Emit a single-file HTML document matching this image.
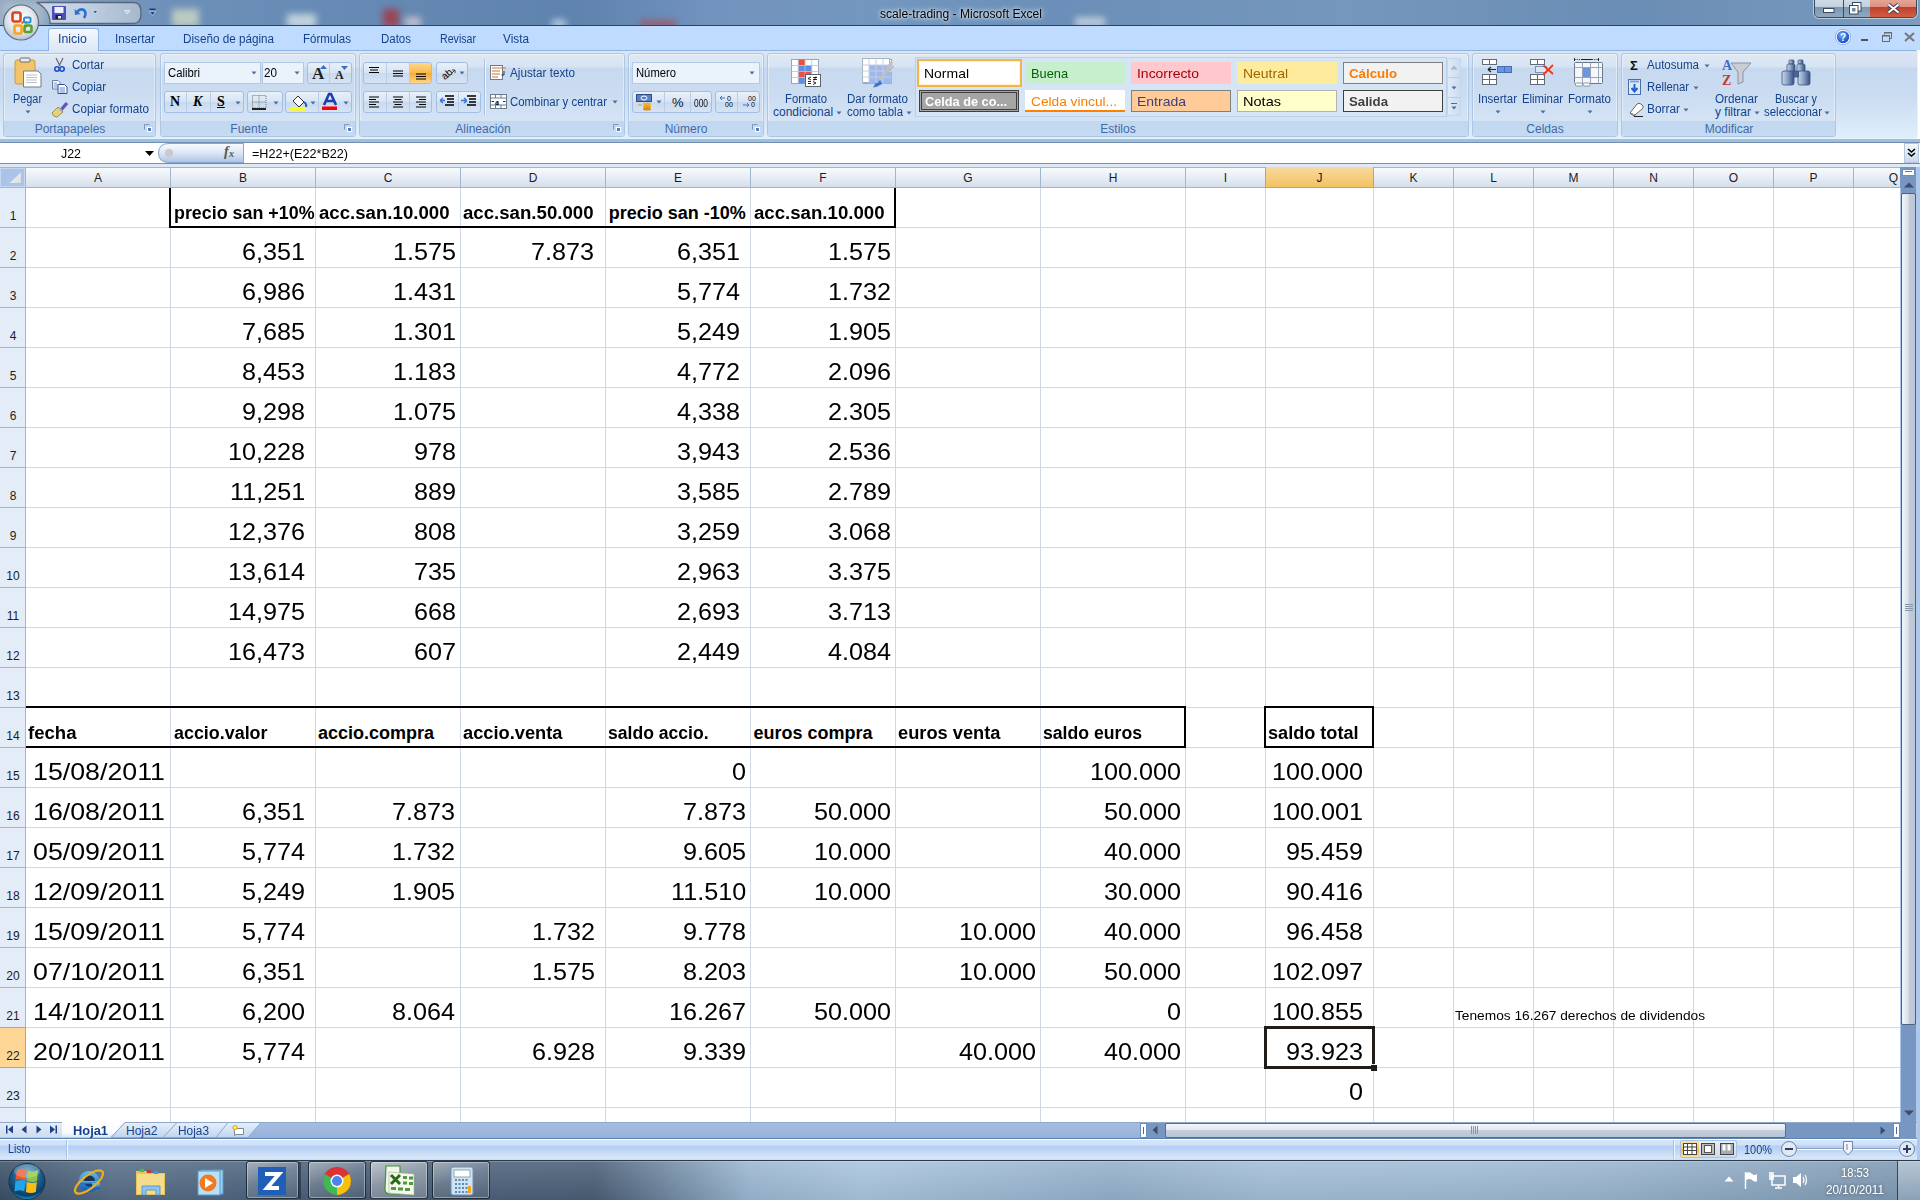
<!DOCTYPE html>
<html><head><meta charset="utf-8"><title>scale-trading - Microsoft Excel</title>
<style>
html,body{margin:0;padding:0;width:1920px;height:1200px;overflow:hidden;background:#fff;}
body{position:relative;font-family:"Liberation Sans",sans-serif;}
body>div,.a{position:absolute;}
svg{position:absolute;overflow:visible}
</style></head><body>
<div style="left:26px;top:188px;width:1874px;height:934px;background:#fff"></div>
<div style="left:26px;top:227px;width:1874px;height:1px;background:#d0d7e5"></div>
<div style="left:26px;top:267px;width:1874px;height:1px;background:#d0d7e5"></div>
<div style="left:26px;top:307px;width:1874px;height:1px;background:#d0d7e5"></div>
<div style="left:26px;top:347px;width:1874px;height:1px;background:#d0d7e5"></div>
<div style="left:26px;top:387px;width:1874px;height:1px;background:#d0d7e5"></div>
<div style="left:26px;top:427px;width:1874px;height:1px;background:#d0d7e5"></div>
<div style="left:26px;top:467px;width:1874px;height:1px;background:#d0d7e5"></div>
<div style="left:26px;top:507px;width:1874px;height:1px;background:#d0d7e5"></div>
<div style="left:26px;top:547px;width:1874px;height:1px;background:#d0d7e5"></div>
<div style="left:26px;top:587px;width:1874px;height:1px;background:#d0d7e5"></div>
<div style="left:26px;top:627px;width:1874px;height:1px;background:#d0d7e5"></div>
<div style="left:26px;top:667px;width:1874px;height:1px;background:#d0d7e5"></div>
<div style="left:26px;top:707px;width:1874px;height:1px;background:#d0d7e5"></div>
<div style="left:26px;top:747px;width:1874px;height:1px;background:#d0d7e5"></div>
<div style="left:26px;top:787px;width:1874px;height:1px;background:#d0d7e5"></div>
<div style="left:26px;top:827px;width:1874px;height:1px;background:#d0d7e5"></div>
<div style="left:26px;top:867px;width:1874px;height:1px;background:#d0d7e5"></div>
<div style="left:26px;top:907px;width:1874px;height:1px;background:#d0d7e5"></div>
<div style="left:26px;top:947px;width:1874px;height:1px;background:#d0d7e5"></div>
<div style="left:26px;top:987px;width:1874px;height:1px;background:#d0d7e5"></div>
<div style="left:26px;top:1027px;width:1874px;height:1px;background:#d0d7e5"></div>
<div style="left:26px;top:1067px;width:1874px;height:1px;background:#d0d7e5"></div>
<div style="left:26px;top:1107px;width:1874px;height:1px;background:#d0d7e5"></div>
<div style="left:170px;top:188px;width:1px;height:934px;background:#d0d7e5"></div>
<div style="left:315px;top:188px;width:1px;height:934px;background:#d0d7e5"></div>
<div style="left:460px;top:188px;width:1px;height:934px;background:#d0d7e5"></div>
<div style="left:605px;top:188px;width:1px;height:934px;background:#d0d7e5"></div>
<div style="left:750px;top:188px;width:1px;height:934px;background:#d0d7e5"></div>
<div style="left:895px;top:188px;width:1px;height:934px;background:#d0d7e5"></div>
<div style="left:1040px;top:188px;width:1px;height:934px;background:#d0d7e5"></div>
<div style="left:1185px;top:188px;width:1px;height:934px;background:#d0d7e5"></div>
<div style="left:1265px;top:188px;width:1px;height:934px;background:#d0d7e5"></div>
<div style="left:1373px;top:188px;width:1px;height:934px;background:#d0d7e5"></div>
<div style="left:1453px;top:188px;width:1px;height:934px;background:#d0d7e5"></div>
<div style="left:1533px;top:188px;width:1px;height:934px;background:#d0d7e5"></div>
<div style="left:1613px;top:188px;width:1px;height:934px;background:#d0d7e5"></div>
<div style="left:1693px;top:188px;width:1px;height:934px;background:#d0d7e5"></div>
<div style="left:1773px;top:188px;width:1px;height:934px;background:#d0d7e5"></div>
<div style="left:1853px;top:188px;width:1px;height:934px;background:#d0d7e5"></div>
<div style="left:0px;top:167px;width:1900px;height:1px;background:#9eb6ce"></div>
<div style="left:26px;top:168px;width:1874px;height:19px;background:linear-gradient(#f8fbfd,#e4eaf3 60%,#d5deeb)"></div>
<div style="left:0px;top:187px;width:1900px;height:1px;background:#9eb6ce"></div>
<div style="left:170px;top:168px;width:1px;height:19px;background:#9eb6ce"></div>
<div style="left:94.00px;top:171.84px;font-size:12px;line-height:12px;color:#1c1c1c;white-space:pre;">A</div>
<div style="left:315px;top:168px;width:1px;height:19px;background:#9eb6ce"></div>
<div style="left:239.00px;top:171.84px;font-size:12px;line-height:12px;color:#1c1c1c;white-space:pre;">B</div>
<div style="left:460px;top:168px;width:1px;height:19px;background:#9eb6ce"></div>
<div style="left:383.67px;top:171.84px;font-size:12px;line-height:12px;color:#1c1c1c;white-space:pre;">C</div>
<div style="left:605px;top:168px;width:1px;height:19px;background:#9eb6ce"></div>
<div style="left:528.67px;top:171.84px;font-size:12px;line-height:12px;color:#1c1c1c;white-space:pre;">D</div>
<div style="left:750px;top:168px;width:1px;height:19px;background:#9eb6ce"></div>
<div style="left:674.00px;top:171.84px;font-size:12px;line-height:12px;color:#1c1c1c;white-space:pre;">E</div>
<div style="left:895px;top:168px;width:1px;height:19px;background:#9eb6ce"></div>
<div style="left:819.34px;top:171.84px;font-size:12px;line-height:12px;color:#1c1c1c;white-space:pre;">F</div>
<div style="left:1040px;top:168px;width:1px;height:19px;background:#9eb6ce"></div>
<div style="left:963.33px;top:171.84px;font-size:12px;line-height:12px;color:#1c1c1c;white-space:pre;">G</div>
<div style="left:1185px;top:168px;width:1px;height:19px;background:#9eb6ce"></div>
<div style="left:1108.67px;top:171.84px;font-size:12px;line-height:12px;color:#1c1c1c;white-space:pre;">H</div>
<div style="left:1265px;top:168px;width:1px;height:19px;background:#9eb6ce"></div>
<div style="left:1223.83px;top:171.84px;font-size:12px;line-height:12px;color:#1c1c1c;white-space:pre;">I</div>
<div style="left:1265px;top:167px;width:109px;height:21px;background:linear-gradient(#f9d99f,#f1c15f);border:0"></div>
<div style="left:1265px;top:167px;width:1px;height:21px;background:#f29536"></div>
<div style="left:1373px;top:167px;width:1px;height:21px;background:#f29536"></div>
<div style="left:1265px;top:187px;width:109px;height:1px;background:#f29536"></div>
<div style="left:1316.50px;top:171.84px;font-size:12px;line-height:12px;color:#1c1c1c;white-space:pre;">J</div>
<div style="left:1453px;top:168px;width:1px;height:19px;background:#9eb6ce"></div>
<div style="left:1409.50px;top:171.84px;font-size:12px;line-height:12px;color:#1c1c1c;white-space:pre;">K</div>
<div style="left:1533px;top:168px;width:1px;height:19px;background:#9eb6ce"></div>
<div style="left:1490.16px;top:171.84px;font-size:12px;line-height:12px;color:#1c1c1c;white-space:pre;">L</div>
<div style="left:1613px;top:168px;width:1px;height:19px;background:#9eb6ce"></div>
<div style="left:1568.50px;top:171.84px;font-size:12px;line-height:12px;color:#1c1c1c;white-space:pre;">M</div>
<div style="left:1693px;top:168px;width:1px;height:19px;background:#9eb6ce"></div>
<div style="left:1649.17px;top:171.84px;font-size:12px;line-height:12px;color:#1c1c1c;white-space:pre;">N</div>
<div style="left:1773px;top:168px;width:1px;height:19px;background:#9eb6ce"></div>
<div style="left:1728.83px;top:171.84px;font-size:12px;line-height:12px;color:#1c1c1c;white-space:pre;">O</div>
<div style="left:1853px;top:168px;width:1px;height:19px;background:#9eb6ce"></div>
<div style="left:1809.50px;top:171.84px;font-size:12px;line-height:12px;color:#1c1c1c;white-space:pre;">P</div>
<div style="left:1933px;top:168px;width:1px;height:19px;background:#9eb6ce"></div>
<div style="left:1888.83px;top:171.84px;font-size:12px;line-height:12px;color:#1c1c1c;white-space:pre;">Q</div>
<div style="left:0px;top:168px;width:25px;height:19px;background:#a9c4e8;border:1px solid #c5d8f0;box-sizing:border-box"></div>
<div style="left:25px;top:167px;width:1px;height:21px;background:#9eb6ce"></div>
<svg style="left:9px;top:172px" width="13" height="12" viewBox="0 0 13 12"><defs><linearGradient id="sa" x1="0" y1="0" x2="1" y2="1"><stop offset="0" stop-color="#f4f6f8"/><stop offset="1" stop-color="#d9dde3"/></linearGradient></defs><path d="M12 0.5 V11 H0.5 Z" fill="url(#sa)"/></svg>
<div style="left:0px;top:188px;width:25px;height:934px;background:#e4ecf7"></div>
<div style="left:25px;top:188px;width:1px;height:934px;background:#9eb6ce"></div>
<div style="left:0px;top:227px;width:25px;height:1px;background:#9eb6ce"></div>
<div style="left:9.66px;top:209.84px;font-size:12px;line-height:12px;color:#1c1c1c;white-space:pre;">1</div>
<div style="left:0px;top:267px;width:25px;height:1px;background:#9eb6ce"></div>
<div style="left:9.66px;top:249.84px;font-size:12px;line-height:12px;color:#1c1c1c;white-space:pre;">2</div>
<div style="left:0px;top:307px;width:25px;height:1px;background:#9eb6ce"></div>
<div style="left:9.66px;top:289.84px;font-size:12px;line-height:12px;color:#1c1c1c;white-space:pre;">3</div>
<div style="left:0px;top:347px;width:25px;height:1px;background:#9eb6ce"></div>
<div style="left:9.66px;top:329.84px;font-size:12px;line-height:12px;color:#1c1c1c;white-space:pre;">4</div>
<div style="left:0px;top:387px;width:25px;height:1px;background:#9eb6ce"></div>
<div style="left:9.66px;top:369.84px;font-size:12px;line-height:12px;color:#1c1c1c;white-space:pre;">5</div>
<div style="left:0px;top:427px;width:25px;height:1px;background:#9eb6ce"></div>
<div style="left:9.66px;top:409.84px;font-size:12px;line-height:12px;color:#1c1c1c;white-space:pre;">6</div>
<div style="left:0px;top:467px;width:25px;height:1px;background:#9eb6ce"></div>
<div style="left:9.66px;top:449.84px;font-size:12px;line-height:12px;color:#1c1c1c;white-space:pre;">7</div>
<div style="left:0px;top:507px;width:25px;height:1px;background:#9eb6ce"></div>
<div style="left:9.66px;top:489.84px;font-size:12px;line-height:12px;color:#1c1c1c;white-space:pre;">8</div>
<div style="left:0px;top:547px;width:25px;height:1px;background:#9eb6ce"></div>
<div style="left:9.66px;top:529.84px;font-size:12px;line-height:12px;color:#1c1c1c;white-space:pre;">9</div>
<div style="left:0px;top:587px;width:25px;height:1px;background:#9eb6ce"></div>
<div style="left:6.33px;top:569.84px;font-size:12px;line-height:12px;color:#1c1c1c;white-space:pre;">10</div>
<div style="left:0px;top:627px;width:25px;height:1px;background:#9eb6ce"></div>
<div style="left:6.77px;top:609.84px;font-size:12px;line-height:12px;color:#1c1c1c;white-space:pre;">11</div>
<div style="left:0px;top:667px;width:25px;height:1px;background:#9eb6ce"></div>
<div style="left:6.33px;top:649.84px;font-size:12px;line-height:12px;color:#1c1c1c;white-space:pre;">12</div>
<div style="left:0px;top:707px;width:25px;height:1px;background:#9eb6ce"></div>
<div style="left:6.33px;top:689.84px;font-size:12px;line-height:12px;color:#1c1c1c;white-space:pre;">13</div>
<div style="left:0px;top:747px;width:25px;height:1px;background:#9eb6ce"></div>
<div style="left:6.33px;top:729.84px;font-size:12px;line-height:12px;color:#1c1c1c;white-space:pre;">14</div>
<div style="left:0px;top:787px;width:25px;height:1px;background:#9eb6ce"></div>
<div style="left:6.33px;top:769.84px;font-size:12px;line-height:12px;color:#1c1c1c;white-space:pre;">15</div>
<div style="left:0px;top:827px;width:25px;height:1px;background:#9eb6ce"></div>
<div style="left:6.33px;top:809.84px;font-size:12px;line-height:12px;color:#1c1c1c;white-space:pre;">16</div>
<div style="left:0px;top:867px;width:25px;height:1px;background:#9eb6ce"></div>
<div style="left:6.33px;top:849.84px;font-size:12px;line-height:12px;color:#1c1c1c;white-space:pre;">17</div>
<div style="left:0px;top:907px;width:25px;height:1px;background:#9eb6ce"></div>
<div style="left:6.33px;top:889.84px;font-size:12px;line-height:12px;color:#1c1c1c;white-space:pre;">18</div>
<div style="left:0px;top:947px;width:25px;height:1px;background:#9eb6ce"></div>
<div style="left:6.33px;top:929.84px;font-size:12px;line-height:12px;color:#1c1c1c;white-space:pre;">19</div>
<div style="left:0px;top:987px;width:25px;height:1px;background:#9eb6ce"></div>
<div style="left:6.33px;top:969.84px;font-size:12px;line-height:12px;color:#1c1c1c;white-space:pre;">20</div>
<div style="left:0px;top:1027px;width:25px;height:1px;background:#9eb6ce"></div>
<div style="left:6.33px;top:1009.84px;font-size:12px;line-height:12px;color:#1c1c1c;white-space:pre;">21</div>
<div style="left:0px;top:1027px;width:26px;height:41px;background:#fed797;"></div>
<div style="left:0px;top:1027px;width:26px;height:1px;background:#f29536"></div>
<div style="left:0px;top:1067px;width:26px;height:1px;background:#f29536"></div>
<div style="left:25px;top:1027px;width:1px;height:41px;background:#f29536"></div>
<div style="left:6.33px;top:1049.84px;font-size:12px;line-height:12px;color:#1c1c1c;white-space:pre;">22</div>
<div style="left:0px;top:1107px;width:25px;height:1px;background:#9eb6ce"></div>
<div style="left:6.33px;top:1089.84px;font-size:12px;line-height:12px;color:#1c1c1c;white-space:pre;">23</div>
<div style="left:6.33px;top:1129.84px;font-size:12px;line-height:12px;color:#1c1c1c;white-space:pre;">24</div>
<div style="left:169px;top:188px;width:2px;height:40px;background:#000"></div>
<div style="left:169px;top:226px;width:727px;height:2px;background:#000"></div>
<div style="left:894px;top:188px;width:2px;height:40px;background:#000"></div>
<div style="left:26px;top:706px;width:1160px;height:2px;background:#000"></div>
<div style="left:26px;top:746px;width:1160px;height:2px;background:#000"></div>
<div style="left:1184px;top:706px;width:2px;height:42px;background:#000"></div>
<div style="left:1264px;top:706px;width:110px;height:2px;background:#000"></div>
<div style="left:1264px;top:746px;width:110px;height:2px;background:#000"></div>
<div style="left:1264px;top:706px;width:2px;height:42px;background:#000"></div>
<div style="left:1372px;top:706px;width:2px;height:42px;background:#000"></div>
<div style="left:1264px;top:1026px;width:111px;height:3px;background:#221c18"></div>
<div style="left:1264px;top:1066px;width:107px;height:3px;background:#221c18"></div>
<div style="left:1264px;top:1026px;width:3px;height:43px;background:#221c18"></div>
<div style="left:1372px;top:1026px;width:3px;height:38px;background:#221c18"></div>
<div style="left:1371px;top:1065px;width:6px;height:6px;background:#221c18"></div>
<div style="left:173.60px;top:204.26px;font-size:18px;line-height:18px;color:#000;font-weight:bold;transform:scaleX(0.9925);transform-origin:0 0;white-space:pre;">precio san +10%</div>
<div style="left:318.50px;top:204.26px;font-size:18px;line-height:18px;color:#000;font-weight:bold;transform:scaleX(1.0350);transform-origin:0 0;white-space:pre;">acc.san.10.000</div>
<div style="left:463.40px;top:204.26px;font-size:18px;line-height:18px;color:#000;font-weight:bold;transform:scaleX(1.0350);transform-origin:0 0;white-space:pre;">acc.san.50.000</div>
<div style="left:608.70px;top:204.26px;font-size:18px;line-height:18px;color:#000;font-weight:bold;white-space:pre;">precio san -10%</div>
<div style="left:753.50px;top:204.26px;font-size:18px;line-height:18px;color:#000;font-weight:bold;transform:scaleX(1.0350);transform-origin:0 0;white-space:pre;">acc.san.10.000</div>
<div style="left:241.74px;top:240.08px;font-size:24px;line-height:24px;color:#000;transform:scaleX(1.0500);transform-origin:0 0;white-space:pre;">6,351</div>
<div style="left:392.89px;top:240.08px;font-size:24px;line-height:24px;color:#000;transform:scaleX(1.0500);transform-origin:0 0;white-space:pre;">1.575</div>
<div style="left:677.14px;top:240.08px;font-size:24px;line-height:24px;color:#000;transform:scaleX(1.0500);transform-origin:0 0;white-space:pre;">6,351</div>
<div style="left:827.54px;top:240.08px;font-size:24px;line-height:24px;color:#000;transform:scaleX(1.0500);transform-origin:0 0;white-space:pre;">1.575</div>
<div style="left:241.74px;top:280.08px;font-size:24px;line-height:24px;color:#000;transform:scaleX(1.0500);transform-origin:0 0;white-space:pre;">6,986</div>
<div style="left:392.89px;top:280.08px;font-size:24px;line-height:24px;color:#000;transform:scaleX(1.0500);transform-origin:0 0;white-space:pre;">1.431</div>
<div style="left:677.14px;top:280.08px;font-size:24px;line-height:24px;color:#000;transform:scaleX(1.0500);transform-origin:0 0;white-space:pre;">5,774</div>
<div style="left:827.54px;top:280.08px;font-size:24px;line-height:24px;color:#000;transform:scaleX(1.0500);transform-origin:0 0;white-space:pre;">1.732</div>
<div style="left:241.74px;top:320.08px;font-size:24px;line-height:24px;color:#000;transform:scaleX(1.0500);transform-origin:0 0;white-space:pre;">7,685</div>
<div style="left:392.89px;top:320.08px;font-size:24px;line-height:24px;color:#000;transform:scaleX(1.0500);transform-origin:0 0;white-space:pre;">1.301</div>
<div style="left:677.14px;top:320.08px;font-size:24px;line-height:24px;color:#000;transform:scaleX(1.0500);transform-origin:0 0;white-space:pre;">5,249</div>
<div style="left:827.54px;top:320.08px;font-size:24px;line-height:24px;color:#000;transform:scaleX(1.0500);transform-origin:0 0;white-space:pre;">1.905</div>
<div style="left:241.74px;top:360.08px;font-size:24px;line-height:24px;color:#000;transform:scaleX(1.0500);transform-origin:0 0;white-space:pre;">8,453</div>
<div style="left:392.89px;top:360.08px;font-size:24px;line-height:24px;color:#000;transform:scaleX(1.0500);transform-origin:0 0;white-space:pre;">1.183</div>
<div style="left:677.14px;top:360.08px;font-size:24px;line-height:24px;color:#000;transform:scaleX(1.0500);transform-origin:0 0;white-space:pre;">4,772</div>
<div style="left:827.54px;top:360.08px;font-size:24px;line-height:24px;color:#000;transform:scaleX(1.0500);transform-origin:0 0;white-space:pre;">2.096</div>
<div style="left:241.74px;top:400.08px;font-size:24px;line-height:24px;color:#000;transform:scaleX(1.0500);transform-origin:0 0;white-space:pre;">9,298</div>
<div style="left:392.89px;top:400.08px;font-size:24px;line-height:24px;color:#000;transform:scaleX(1.0500);transform-origin:0 0;white-space:pre;">1.075</div>
<div style="left:677.14px;top:400.08px;font-size:24px;line-height:24px;color:#000;transform:scaleX(1.0500);transform-origin:0 0;white-space:pre;">4,338</div>
<div style="left:827.54px;top:400.08px;font-size:24px;line-height:24px;color:#000;transform:scaleX(1.0500);transform-origin:0 0;white-space:pre;">2.305</div>
<div style="left:227.73px;top:440.08px;font-size:24px;line-height:24px;color:#000;transform:scaleX(1.0500);transform-origin:0 0;white-space:pre;">10,228</div>
<div style="left:413.91px;top:440.08px;font-size:24px;line-height:24px;color:#000;transform:scaleX(1.0500);transform-origin:0 0;white-space:pre;">978</div>
<div style="left:677.14px;top:440.08px;font-size:24px;line-height:24px;color:#000;transform:scaleX(1.0500);transform-origin:0 0;white-space:pre;">3,943</div>
<div style="left:827.54px;top:440.08px;font-size:24px;line-height:24px;color:#000;transform:scaleX(1.0500);transform-origin:0 0;white-space:pre;">2.536</div>
<div style="left:229.60px;top:480.08px;font-size:24px;line-height:24px;color:#000;transform:scaleX(1.0500);transform-origin:0 0;white-space:pre;">11,251</div>
<div style="left:413.91px;top:480.08px;font-size:24px;line-height:24px;color:#000;transform:scaleX(1.0500);transform-origin:0 0;white-space:pre;">889</div>
<div style="left:677.14px;top:480.08px;font-size:24px;line-height:24px;color:#000;transform:scaleX(1.0500);transform-origin:0 0;white-space:pre;">3,585</div>
<div style="left:827.54px;top:480.08px;font-size:24px;line-height:24px;color:#000;transform:scaleX(1.0500);transform-origin:0 0;white-space:pre;">2.789</div>
<div style="left:227.73px;top:520.08px;font-size:24px;line-height:24px;color:#000;transform:scaleX(1.0500);transform-origin:0 0;white-space:pre;">12,376</div>
<div style="left:413.91px;top:520.08px;font-size:24px;line-height:24px;color:#000;transform:scaleX(1.0500);transform-origin:0 0;white-space:pre;">808</div>
<div style="left:677.14px;top:520.08px;font-size:24px;line-height:24px;color:#000;transform:scaleX(1.0500);transform-origin:0 0;white-space:pre;">3,259</div>
<div style="left:827.54px;top:520.08px;font-size:24px;line-height:24px;color:#000;transform:scaleX(1.0500);transform-origin:0 0;white-space:pre;">3.068</div>
<div style="left:227.73px;top:560.08px;font-size:24px;line-height:24px;color:#000;transform:scaleX(1.0500);transform-origin:0 0;white-space:pre;">13,614</div>
<div style="left:413.91px;top:560.08px;font-size:24px;line-height:24px;color:#000;transform:scaleX(1.0500);transform-origin:0 0;white-space:pre;">735</div>
<div style="left:677.14px;top:560.08px;font-size:24px;line-height:24px;color:#000;transform:scaleX(1.0500);transform-origin:0 0;white-space:pre;">2,963</div>
<div style="left:827.54px;top:560.08px;font-size:24px;line-height:24px;color:#000;transform:scaleX(1.0500);transform-origin:0 0;white-space:pre;">3.375</div>
<div style="left:227.73px;top:600.08px;font-size:24px;line-height:24px;color:#000;transform:scaleX(1.0500);transform-origin:0 0;white-space:pre;">14,975</div>
<div style="left:413.91px;top:600.08px;font-size:24px;line-height:24px;color:#000;transform:scaleX(1.0500);transform-origin:0 0;white-space:pre;">668</div>
<div style="left:677.14px;top:600.08px;font-size:24px;line-height:24px;color:#000;transform:scaleX(1.0500);transform-origin:0 0;white-space:pre;">2,693</div>
<div style="left:827.54px;top:600.08px;font-size:24px;line-height:24px;color:#000;transform:scaleX(1.0500);transform-origin:0 0;white-space:pre;">3.713</div>
<div style="left:227.73px;top:640.08px;font-size:24px;line-height:24px;color:#000;transform:scaleX(1.0500);transform-origin:0 0;white-space:pre;">16,473</div>
<div style="left:413.91px;top:640.08px;font-size:24px;line-height:24px;color:#000;transform:scaleX(1.0500);transform-origin:0 0;white-space:pre;">607</div>
<div style="left:677.14px;top:640.08px;font-size:24px;line-height:24px;color:#000;transform:scaleX(1.0500);transform-origin:0 0;white-space:pre;">2,449</div>
<div style="left:827.54px;top:640.08px;font-size:24px;line-height:24px;color:#000;transform:scaleX(1.0500);transform-origin:0 0;white-space:pre;">4.084</div>
<div style="left:531.44px;top:240.08px;font-size:24px;line-height:24px;color:#000;transform:scaleX(1.0500);transform-origin:0 0;white-space:pre;">7.873</div>
<div style="left:28.40px;top:724.26px;font-size:18px;line-height:18px;color:#000;font-weight:bold;transform:scaleX(1.0316);transform-origin:0 0;white-space:pre;">fecha</div>
<div style="left:173.60px;top:724.26px;font-size:18px;line-height:18px;color:#000;font-weight:bold;transform:scaleX(0.9942);transform-origin:0 0;white-space:pre;">accio.valor</div>
<div style="left:318.00px;top:724.26px;font-size:18px;line-height:18px;color:#000;font-weight:bold;white-space:pre;">accio.compra</div>
<div style="left:462.75px;top:724.26px;font-size:18px;line-height:18px;color:#000;font-weight:bold;transform:scaleX(1.0149);transform-origin:0 0;white-space:pre;">accio.venta</div>
<div style="left:608.00px;top:724.26px;font-size:18px;line-height:18px;color:#000;font-weight:bold;transform:scaleX(0.9754);transform-origin:0 0;white-space:pre;">saldo accio.</div>
<div style="left:753.40px;top:724.26px;font-size:18px;line-height:18px;color:#000;font-weight:bold;white-space:pre;">euros compra</div>
<div style="left:898.40px;top:724.26px;font-size:18px;line-height:18px;color:#000;font-weight:bold;transform:scaleX(1.0145);transform-origin:0 0;white-space:pre;">euros venta</div>
<div style="left:1043.00px;top:724.26px;font-size:18px;line-height:18px;color:#000;font-weight:bold;transform:scaleX(0.9800);transform-origin:0 0;white-space:pre;">saldo euros</div>
<div style="left:1268.00px;top:724.26px;font-size:18px;line-height:18px;color:#000;font-weight:bold;transform:scaleX(1.0056);transform-origin:0 0;white-space:pre;">saldo total</div>
<div style="left:33.00px;top:760.08px;font-size:24px;line-height:24px;color:#000;transform:scaleX(1.1150);transform-origin:0 0;white-space:pre;">15/08/2011</div>
<div style="left:731.69px;top:760.08px;font-size:24px;line-height:24px;color:#000;transform:scaleX(1.0500);transform-origin:0 0;white-space:pre;">0</div>
<div style="left:1089.82px;top:760.08px;font-size:24px;line-height:24px;color:#000;transform:scaleX(1.0500);transform-origin:0 0;white-space:pre;">100.000</div>
<div style="left:1271.72px;top:760.08px;font-size:24px;line-height:24px;color:#000;transform:scaleX(1.0500);transform-origin:0 0;white-space:pre;">100.000</div>
<div style="left:33.00px;top:800.08px;font-size:24px;line-height:24px;color:#000;transform:scaleX(1.1150);transform-origin:0 0;white-space:pre;">16/08/2011</div>
<div style="left:241.89px;top:800.08px;font-size:24px;line-height:24px;color:#000;transform:scaleX(1.0500);transform-origin:0 0;white-space:pre;">6,351</div>
<div style="left:391.89px;top:800.08px;font-size:24px;line-height:24px;color:#000;transform:scaleX(1.0500);transform-origin:0 0;white-space:pre;">7.873</div>
<div style="left:682.64px;top:800.08px;font-size:24px;line-height:24px;color:#000;transform:scaleX(1.0500);transform-origin:0 0;white-space:pre;">7.873</div>
<div style="left:814.13px;top:800.08px;font-size:24px;line-height:24px;color:#000;transform:scaleX(1.0500);transform-origin:0 0;white-space:pre;">50.000</div>
<div style="left:1103.83px;top:800.08px;font-size:24px;line-height:24px;color:#000;transform:scaleX(1.0500);transform-origin:0 0;white-space:pre;">50.000</div>
<div style="left:1271.72px;top:800.08px;font-size:24px;line-height:24px;color:#000;transform:scaleX(1.0500);transform-origin:0 0;white-space:pre;">100.001</div>
<div style="left:33.00px;top:840.08px;font-size:24px;line-height:24px;color:#000;transform:scaleX(1.1150);transform-origin:0 0;white-space:pre;">05/09/2011</div>
<div style="left:241.89px;top:840.08px;font-size:24px;line-height:24px;color:#000;transform:scaleX(1.0500);transform-origin:0 0;white-space:pre;">5,774</div>
<div style="left:391.89px;top:840.08px;font-size:24px;line-height:24px;color:#000;transform:scaleX(1.0500);transform-origin:0 0;white-space:pre;">1.732</div>
<div style="left:682.64px;top:840.08px;font-size:24px;line-height:24px;color:#000;transform:scaleX(1.0500);transform-origin:0 0;white-space:pre;">9.605</div>
<div style="left:814.13px;top:840.08px;font-size:24px;line-height:24px;color:#000;transform:scaleX(1.0500);transform-origin:0 0;white-space:pre;">10.000</div>
<div style="left:1103.83px;top:840.08px;font-size:24px;line-height:24px;color:#000;transform:scaleX(1.0500);transform-origin:0 0;white-space:pre;">40.000</div>
<div style="left:1285.73px;top:840.08px;font-size:24px;line-height:24px;color:#000;transform:scaleX(1.0500);transform-origin:0 0;white-space:pre;">95.459</div>
<div style="left:33.00px;top:880.08px;font-size:24px;line-height:24px;color:#000;transform:scaleX(1.1150);transform-origin:0 0;white-space:pre;">12/09/2011</div>
<div style="left:241.89px;top:880.08px;font-size:24px;line-height:24px;color:#000;transform:scaleX(1.0500);transform-origin:0 0;white-space:pre;">5,249</div>
<div style="left:391.89px;top:880.08px;font-size:24px;line-height:24px;color:#000;transform:scaleX(1.0500);transform-origin:0 0;white-space:pre;">1.905</div>
<div style="left:670.50px;top:880.08px;font-size:24px;line-height:24px;color:#000;transform:scaleX(1.0500);transform-origin:0 0;white-space:pre;">11.510</div>
<div style="left:814.13px;top:880.08px;font-size:24px;line-height:24px;color:#000;transform:scaleX(1.0500);transform-origin:0 0;white-space:pre;">10.000</div>
<div style="left:1103.83px;top:880.08px;font-size:24px;line-height:24px;color:#000;transform:scaleX(1.0500);transform-origin:0 0;white-space:pre;">30.000</div>
<div style="left:1285.73px;top:880.08px;font-size:24px;line-height:24px;color:#000;transform:scaleX(1.0500);transform-origin:0 0;white-space:pre;">90.416</div>
<div style="left:33.00px;top:920.08px;font-size:24px;line-height:24px;color:#000;transform:scaleX(1.1150);transform-origin:0 0;white-space:pre;">15/09/2011</div>
<div style="left:241.89px;top:920.08px;font-size:24px;line-height:24px;color:#000;transform:scaleX(1.0500);transform-origin:0 0;white-space:pre;">5,774</div>
<div style="left:531.74px;top:920.08px;font-size:24px;line-height:24px;color:#000;transform:scaleX(1.0500);transform-origin:0 0;white-space:pre;">1.732</div>
<div style="left:682.64px;top:920.08px;font-size:24px;line-height:24px;color:#000;transform:scaleX(1.0500);transform-origin:0 0;white-space:pre;">9.778</div>
<div style="left:959.23px;top:920.08px;font-size:24px;line-height:24px;color:#000;transform:scaleX(1.0500);transform-origin:0 0;white-space:pre;">10.000</div>
<div style="left:1103.83px;top:920.08px;font-size:24px;line-height:24px;color:#000;transform:scaleX(1.0500);transform-origin:0 0;white-space:pre;">40.000</div>
<div style="left:1285.73px;top:920.08px;font-size:24px;line-height:24px;color:#000;transform:scaleX(1.0500);transform-origin:0 0;white-space:pre;">96.458</div>
<div style="left:33.00px;top:960.08px;font-size:24px;line-height:24px;color:#000;transform:scaleX(1.1150);transform-origin:0 0;white-space:pre;">07/10/2011</div>
<div style="left:241.89px;top:960.08px;font-size:24px;line-height:24px;color:#000;transform:scaleX(1.0500);transform-origin:0 0;white-space:pre;">6,351</div>
<div style="left:531.74px;top:960.08px;font-size:24px;line-height:24px;color:#000;transform:scaleX(1.0500);transform-origin:0 0;white-space:pre;">1.575</div>
<div style="left:682.64px;top:960.08px;font-size:24px;line-height:24px;color:#000;transform:scaleX(1.0500);transform-origin:0 0;white-space:pre;">8.203</div>
<div style="left:959.23px;top:960.08px;font-size:24px;line-height:24px;color:#000;transform:scaleX(1.0500);transform-origin:0 0;white-space:pre;">10.000</div>
<div style="left:1103.83px;top:960.08px;font-size:24px;line-height:24px;color:#000;transform:scaleX(1.0500);transform-origin:0 0;white-space:pre;">50.000</div>
<div style="left:1271.72px;top:960.08px;font-size:24px;line-height:24px;color:#000;transform:scaleX(1.0500);transform-origin:0 0;white-space:pre;">102.097</div>
<div style="left:33.00px;top:1000.08px;font-size:24px;line-height:24px;color:#000;transform:scaleX(1.1150);transform-origin:0 0;white-space:pre;">14/10/2011</div>
<div style="left:241.89px;top:1000.08px;font-size:24px;line-height:24px;color:#000;transform:scaleX(1.0500);transform-origin:0 0;white-space:pre;">6,200</div>
<div style="left:391.89px;top:1000.08px;font-size:24px;line-height:24px;color:#000;transform:scaleX(1.0500);transform-origin:0 0;white-space:pre;">8.064</div>
<div style="left:668.63px;top:1000.08px;font-size:24px;line-height:24px;color:#000;transform:scaleX(1.0500);transform-origin:0 0;white-space:pre;">16.267</div>
<div style="left:814.13px;top:1000.08px;font-size:24px;line-height:24px;color:#000;transform:scaleX(1.0500);transform-origin:0 0;white-space:pre;">50.000</div>
<div style="left:1166.89px;top:1000.08px;font-size:24px;line-height:24px;color:#000;transform:scaleX(1.0500);transform-origin:0 0;white-space:pre;">0</div>
<div style="left:1271.72px;top:1000.08px;font-size:24px;line-height:24px;color:#000;transform:scaleX(1.0500);transform-origin:0 0;white-space:pre;">100.855</div>
<div style="left:33.00px;top:1040.08px;font-size:24px;line-height:24px;color:#000;transform:scaleX(1.1150);transform-origin:0 0;white-space:pre;">20/10/2011</div>
<div style="left:241.89px;top:1040.08px;font-size:24px;line-height:24px;color:#000;transform:scaleX(1.0500);transform-origin:0 0;white-space:pre;">5,774</div>
<div style="left:531.74px;top:1040.08px;font-size:24px;line-height:24px;color:#000;transform:scaleX(1.0500);transform-origin:0 0;white-space:pre;">6.928</div>
<div style="left:682.64px;top:1040.08px;font-size:24px;line-height:24px;color:#000;transform:scaleX(1.0500);transform-origin:0 0;white-space:pre;">9.339</div>
<div style="left:959.23px;top:1040.08px;font-size:24px;line-height:24px;color:#000;transform:scaleX(1.0500);transform-origin:0 0;white-space:pre;">40.000</div>
<div style="left:1103.83px;top:1040.08px;font-size:24px;line-height:24px;color:#000;transform:scaleX(1.0500);transform-origin:0 0;white-space:pre;">40.000</div>
<div style="left:1285.73px;top:1040.08px;font-size:24px;line-height:24px;color:#000;transform:scaleX(1.0500);transform-origin:0 0;white-space:pre;">93.923</div>
<div style="left:1348.79px;top:1080.08px;font-size:24px;line-height:24px;color:#000;transform:scaleX(1.0500);transform-origin:0 0;white-space:pre;">0</div>
<div style="left:1455.00px;top:1009.00px;font-size:13px;line-height:13px;color:#000;transform:scaleX(1.0547);transform-origin:0 0;white-space:pre;">Tenemos 16.267 derechos de dividendos</div>
<div style="left:0;top:0;width:1920px;height:25px;background:linear-gradient(90deg,#8aa5c3 0%,#6d90b9 9%,#6589b3 20%,#5e83ad 30%,#7193bd 37%,#7497bf 45%,#6b8fb8 55%,#7597bd 70%,#6a8db5 85%,#7b9bbf 100%)"></div>
<div style="left:0;top:0;width:1920px;height:25px;overflow:hidden"><div style="position:absolute;left:0;top:0;width:45px;height:25px;background:#a8b8c8;filter:blur(4px)"></div><div style="position:absolute;left:172px;top:9px;width:27px;height:18px;background:#bccbc2;filter:blur(3.5px)"></div><div style="position:absolute;left:287px;top:14px;width:29px;height:14px;background:#c3d3dd;filter:blur(3.5px)"></div><div style="position:absolute;left:383px;top:9px;width:16px;height:18px;background:#9a4456;filter:blur(3.5px)"></div><div style="position:absolute;left:405px;top:17px;width:16px;height:10px;background:#c4bfd2;filter:blur(3.5px)"></div><div style="position:absolute;left:640px;top:21px;width:36px;height:6px;background:#a05060;filter:blur(3.5px)"></div><div style="position:absolute;left:552px;top:20px;width:14px;height:7px;background:#c5d5e5;filter:blur(3.5px)"></div><div style="position:absolute;left:1075px;top:17px;width:30px;height:10px;background:#b8c8d8;filter:blur(3px)"></div></div>
<div style="left:0px;top:25px;width:1920px;height:1px;background:#2f4258"></div>
<div style="left:880.00px;top:7.84px;font-size:12px;line-height:12px;color:#000;transform:scaleX(1.0080);transform-origin:0 0;white-space:pre;text-shadow:0 0 6px #fff,0 0 3px rgba(255,255,255,0.8)">scale-trading - Microsoft Excel</div>
<div style="left:1814px;top:-2px;width:103px;height:20px;border:1px solid #3a4a5e;border-radius:0 0 5px 5px;box-sizing:border-box;overflow:hidden;box-shadow:0 0 0 1px rgba(255,255,255,0.5)"><div style="position:absolute;left:0;top:0;width:28px;height:20px;background:linear-gradient(#d0dce8 0%,#c2d1e0 40%,#7d97b3 41%,#93acc6 100%)"></div><div style="position:absolute;left:28px;top:0;width:1px;height:20px;background:#3a4a5e"></div><div style="position:absolute;left:29px;top:0;width:26px;height:20px;background:linear-gradient(#d0dce8 0%,#c2d1e0 40%,#7d97b3 41%,#93acc6 100%)"></div><div style="position:absolute;left:55px;top:0;width:48px;height:20px;background:linear-gradient(#e8a89c 0%,#dc8f80 40%,#c0402a 41%,#d4634a 100%)"></div></div>
<svg style="left:1823px;top:8px;" width="12" height="5" viewBox="0 0 12 5"><rect x="0.5" y="0.5" width="10.5" height="4" fill="#fff" stroke="#3a4a5e" stroke-width="1"/></svg>
<svg style="left:1849px;top:2px;" width="13" height="12" viewBox="0 0 13 12"><rect x="3.5" y="0.5" width="8.5" height="8.5" fill="#fff" stroke="#3a4a5e"/><rect x="0.5" y="3.5" width="8.5" height="8.5" fill="#fff" stroke="#3a4a5e"/><rect x="3" y="6" width="3.5" height="3.5" fill="#6f8aa6"/></svg>
<svg style="left:1887px;top:3px;" width="13" height="11" viewBox="0 0 13 11"><path d="M1.5 1.5 L11.5 9.5 M11.5 1.5 L1.5 9.5" stroke="#3a3a4a" stroke-width="4"/><path d="M1.5 1.5 L11.5 9.5 M11.5 1.5 L1.5 9.5" stroke="#fff" stroke-width="2.2"/></svg>
<div style="left:0px;top:26px;width:1920px;height:24px;background:#bfdbff"></div>
<svg style="left:2px;top:3px;" width="40" height="40" viewBox="0 0 40 40"><defs><radialGradient id="ob" cx="50%" cy="40%" r="60%"><stop offset="0" stop-color="#ffffff"/><stop offset="0.6" stop-color="#e4e8ee"/><stop offset="1" stop-color="#b7c1cc"/></radialGradient></defs><circle cx="19" cy="19.5" r="17.5" fill="url(#ob)" stroke="#5d6b7c" stroke-width="1.2"/><path d="M11 21 H28" stroke="#c8cfd8" stroke-width="1" opacity="0.6"/><rect x="10.5" y="9.5" width="8" height="9" rx="2" fill="none" stroke="#e0451a" stroke-width="2.6"/><rect x="22" y="14.5" width="6.5" height="5" rx="1.5" fill="none" stroke="#2b8fd8" stroke-width="2"/><rect x="12.5" y="22.5" width="7" height="8" rx="1.5" fill="none" stroke="#f5a623" stroke-width="2.6"/><rect x="22.5" y="22.5" width="7" height="6.5" rx="1.5" fill="none" stroke="#5aa02c" stroke-width="2.6"/><circle cx="20.5" cy="19.5" r="1.3" fill="#e85a1a"/><circle cx="24" cy="19.5" r="1.2" fill="#2b8fd8"/><circle cx="20.5" cy="23.5" r="1.2" fill="#f5c023"/><circle cx="24" cy="23.5" r="1.2" fill="#5aa02c"/></svg>
<svg style="left:35px;top:1px;" width="109" height="24" viewBox="0 0 109 24"><defs><linearGradient id="qg" x1="0" y1="0" x2="1" y2="0"><stop offset="0" stop-color="#c6d4e3"/><stop offset="0.4" stop-color="#c3d3e6"/><stop offset="1" stop-color="#a6b8ce"/></linearGradient></defs><path d="M1.5 1.5 H99 Q106 1.5 106 12 Q106 22.5 99 22.5 H15 Q15 8 1.5 1.5 Z" fill="url(#qg)" stroke="#5b6777" stroke-width="1.3"/></svg>
<svg style="left:52px;top:6px;" width="14" height="14" viewBox="0 0 14 14"><rect x="0" y="0" width="14" height="14" rx="1" fill="#4b4fb9"/><rect x="2.5" y="1" width="9" height="6" fill="#eef0fb"/><rect x="3.5" y="9" width="6" height="4" fill="#1d1d35"/><rect x="6" y="10" width="3" height="2.5" fill="#eee"/></svg>
<svg style="left:74px;top:6px;" width="14" height="14" viewBox="0 0 14 14"><path d="M3 6 Q6 2 10 4 Q13 7 10 12" stroke="#2f6fd0" stroke-width="2.6" fill="none"/><path d="M0.5 3 L1 9 L6.5 8 Z" fill="#2f6fd0"/></svg>
<svg style="left:92px;top:10px;" width="7" height="5" viewBox="0 0 7 5"><path d="M0.5 0.5 L6 0.5 L3.2 4 Z" fill="#2b5ba8" stroke="#fff" stroke-width="0.6"/></svg>
<svg style="left:105px;top:6px;" width="14" height="14" viewBox="0 0 14 14"><path d="M11 6 Q8 2 4 4 Q1 7 4 12" stroke="#b3c3d5" stroke-width="2.4" fill="none"/><path d="M13.5 3 L13 9 L7.5 8 Z" fill="#b3c3d5"/></svg>
<svg style="left:124px;top:10px;" width="7" height="5" viewBox="0 0 7 5"><path d="M0.5 0.5 L6 0.5 L3.2 4 Z" fill="#c5ced8" stroke="#fff" stroke-width="0.6"/></svg>
<svg style="left:149px;top:8px;" width="7" height="9" viewBox="0 0 7 9"><rect x="0.5" y="0.5" width="6" height="1.5" fill="#1b3e8c"/><path d="M0.5 3.5 L6.5 3.5 L3.5 7.5 Z" fill="#1b3e8c" stroke="#fff" stroke-width="0.5"/></svg>
<div style="left:48px;top:28px;width:51px;height:23px;border:1px solid #8db2e3;border-bottom:0;border-radius:3px 3px 0 0;box-sizing:border-box;background:linear-gradient(#f6f9fd,#e5edf8 60%,#dde8f6)"></div>
<div style="left:58.25px;top:32.84px;font-size:12px;line-height:12px;color:#15428b;transform:scaleX(1.0263);transform-origin:0 0;white-space:pre;">Inicio</div>
<div style="left:114.50px;top:32.84px;font-size:12px;line-height:12px;color:#15428b;transform:scaleX(0.9833);transform-origin:0 0;white-space:pre;">Insertar</div>
<div style="left:183.00px;top:32.84px;font-size:12px;line-height:12px;color:#15428b;transform:scaleX(0.9743);transform-origin:0 0;white-space:pre;">Diseño de página</div>
<div style="left:302.50px;top:32.84px;font-size:12px;line-height:12px;color:#15428b;transform:scaleX(0.9599);transform-origin:0 0;white-space:pre;">Fórmulas</div>
<div style="left:380.50px;top:32.84px;font-size:12px;line-height:12px;color:#15428b;transform:scaleX(0.9571);transform-origin:0 0;white-space:pre;">Datos</div>
<div style="left:439.50px;top:32.84px;font-size:12px;line-height:12px;color:#15428b;transform:scaleX(0.8851);transform-origin:0 0;white-space:pre;">Revisar</div>
<div style="left:502.50px;top:32.84px;font-size:12px;line-height:12px;color:#15428b;transform:scaleX(0.9826);transform-origin:0 0;white-space:pre;">Vista</div>
<svg style="left:1835px;top:29px;" width="16" height="16" viewBox="0 0 16 16"><defs><radialGradient id="hg" cx="40%" cy="35%" r="70%"><stop offset="0" stop-color="#6fa8ff"/><stop offset="1" stop-color="#0b3fb8"/></radialGradient></defs><circle cx="8" cy="8" r="6.8" fill="url(#hg)" stroke="#fff" stroke-width="1.2"/><circle cx="8" cy="8" r="7.6" fill="none" stroke="#6a90c8" stroke-width="0.6"/><text x="8" y="12" font-size="10" font-weight="bold" text-anchor="middle" fill="#fff" font-family="Liberation Sans">?</text></svg>
<div style="left:1861px;top:39px;width:7px;height:2px;background:#555"></div>
<svg style="left:1882px;top:32px;" width="10" height="10" viewBox="0 0 10 10"><path d="M2.5 2.5 V0.5 H9.5 V6.5 H7.5" fill="none" stroke="#6a6a6a"/><rect x="2.5" y="0" width="7" height="1.5" fill="#6a6a6a"/><rect x="0.5" y="3.5" width="7" height="6" fill="none" stroke="#6a6a6a"/><rect x="0.5" y="3" width="7" height="1.5" fill="#6a6a6a"/></svg>
<svg style="left:1904px;top:32px;" width="11" height="10" viewBox="0 0 11 10"><path d="M1 1 L10 9 M10 1 L1 9" stroke="#777" stroke-width="2"/></svg>
<div style="left:-3px;top:50px;width:1921px;height:89px;background:linear-gradient(#dbe6f4 0px,#d2dff1 16px,#c4d8f0 17px,#cadcf1 45px,#e0effc 88px);border:1px solid #8db2e3;border-bottom-color:#dff5ff;border-right-color:#dff5ff;border-radius:0 3px 4px 0;box-sizing:border-box"></div>
<div style="left:0px;top:139px;width:1920px;height:3px;background:#a6bdd7"></div>
<div style="left:49px;top:50px;width:49px;height:2px;background:#dce7f5"></div>
<div style="left:3px;top:53px;width:153px;height:84px;border:1px solid #adc6e4;border-radius:3px;box-sizing:border-box;background:linear-gradient(#dfe9f5 0px,#d6e3f3 13px,#c7d9ef 14px,#cbdcf1 40px,#d4e4f5 67px);box-shadow:inset 0 0 0 1px rgba(255,255,255,0.4)"></div>
<div style="left:4px;top:121px;width:151px;height:15px;background:linear-gradient(#c1d7ef,#c6dbf2);border-radius:0 0 2px 2px"></div>
<div style="left:34.64px;top:122.84px;font-size:12px;line-height:12px;color:#3e6aaa;white-space:pre;">Portapapeles</div>
<svg style="left:144px;top:124px;" width="8" height="8" viewBox="0 0 8 8"><path d="M0.5 5.5 V0.5 H5.5" stroke="#8097b5" fill="none"/><rect x="3" y="3" width="5" height="5" fill="#fff"/><rect x="4" y="4" width="3" height="3" fill="#5a7bb0"/></svg>
<div style="left:160px;top:53px;width:196px;height:84px;border:1px solid #adc6e4;border-radius:3px;box-sizing:border-box;background:linear-gradient(#dfe9f5 0px,#d6e3f3 13px,#c7d9ef 14px,#cbdcf1 40px,#d4e4f5 67px);box-shadow:inset 0 0 0 1px rgba(255,255,255,0.4)"></div>
<div style="left:161px;top:121px;width:194px;height:15px;background:linear-gradient(#c1d7ef,#c6dbf2);border-radius:0 0 2px 2px"></div>
<div style="left:230.32px;top:122.84px;font-size:12px;line-height:12px;color:#3e6aaa;white-space:pre;">Fuente</div>
<svg style="left:344px;top:124px;" width="8" height="8" viewBox="0 0 8 8"><path d="M0.5 5.5 V0.5 H5.5" stroke="#8097b5" fill="none"/><rect x="3" y="3" width="5" height="5" fill="#fff"/><rect x="4" y="4" width="3" height="3" fill="#5a7bb0"/></svg>
<div style="left:359px;top:53px;width:266px;height:84px;border:1px solid #adc6e4;border-radius:3px;box-sizing:border-box;background:linear-gradient(#dfe9f5 0px,#d6e3f3 13px,#c7d9ef 14px,#cbdcf1 40px,#d4e4f5 67px);box-shadow:inset 0 0 0 1px rgba(255,255,255,0.4)"></div>
<div style="left:360px;top:121px;width:264px;height:15px;background:linear-gradient(#c1d7ef,#c6dbf2);border-radius:0 0 2px 2px"></div>
<div style="left:455.32px;top:122.84px;font-size:12px;line-height:12px;color:#3e6aaa;white-space:pre;">Alineación</div>
<svg style="left:613px;top:124px;" width="8" height="8" viewBox="0 0 8 8"><path d="M0.5 5.5 V0.5 H5.5" stroke="#8097b5" fill="none"/><rect x="3" y="3" width="5" height="5" fill="#fff"/><rect x="4" y="4" width="3" height="3" fill="#5a7bb0"/></svg>
<div style="left:628px;top:53px;width:136px;height:84px;border:1px solid #adc6e4;border-radius:3px;box-sizing:border-box;background:linear-gradient(#dfe9f5 0px,#d6e3f3 13px,#c7d9ef 14px,#cbdcf1 40px,#d4e4f5 67px);box-shadow:inset 0 0 0 1px rgba(255,255,255,0.4)"></div>
<div style="left:629px;top:121px;width:134px;height:15px;background:linear-gradient(#c1d7ef,#c6dbf2);border-radius:0 0 2px 2px"></div>
<div style="left:664.66px;top:122.84px;font-size:12px;line-height:12px;color:#3e6aaa;white-space:pre;">Número</div>
<svg style="left:752px;top:124px;" width="8" height="8" viewBox="0 0 8 8"><path d="M0.5 5.5 V0.5 H5.5" stroke="#8097b5" fill="none"/><rect x="3" y="3" width="5" height="5" fill="#fff"/><rect x="4" y="4" width="3" height="3" fill="#5a7bb0"/></svg>
<div style="left:767px;top:53px;width:702px;height:84px;border:1px solid #adc6e4;border-radius:3px;box-sizing:border-box;background:linear-gradient(#dfe9f5 0px,#d6e3f3 13px,#c7d9ef 14px,#cbdcf1 40px,#d4e4f5 67px);box-shadow:inset 0 0 0 1px rgba(255,255,255,0.4)"></div>
<div style="left:768px;top:121px;width:700px;height:15px;background:linear-gradient(#c1d7ef,#c6dbf2);border-radius:0 0 2px 2px"></div>
<div style="left:1100.33px;top:122.84px;font-size:12px;line-height:12px;color:#3e6aaa;white-space:pre;">Estilos</div>
<div style="left:1472px;top:53px;width:146px;height:84px;border:1px solid #adc6e4;border-radius:3px;box-sizing:border-box;background:linear-gradient(#dfe9f5 0px,#d6e3f3 13px,#c7d9ef 14px,#cbdcf1 40px,#d4e4f5 67px);box-shadow:inset 0 0 0 1px rgba(255,255,255,0.4)"></div>
<div style="left:1473px;top:121px;width:144px;height:15px;background:linear-gradient(#c1d7ef,#c6dbf2);border-radius:0 0 2px 2px"></div>
<div style="left:1526.32px;top:122.84px;font-size:12px;line-height:12px;color:#3e6aaa;white-space:pre;">Celdas</div>
<div style="left:1621px;top:53px;width:215px;height:84px;border:1px solid #adc6e4;border-radius:3px;box-sizing:border-box;background:linear-gradient(#dfe9f5 0px,#d6e3f3 13px,#c7d9ef 14px,#cbdcf1 40px,#d4e4f5 67px);box-shadow:inset 0 0 0 1px rgba(255,255,255,0.4)"></div>
<div style="left:1622px;top:121px;width:213px;height:15px;background:linear-gradient(#c1d7ef,#c6dbf2);border-radius:0 0 2px 2px"></div>
<div style="left:1704.66px;top:122.84px;font-size:12px;line-height:12px;color:#3e6aaa;white-space:pre;">Modificar</div>
<svg style="left:14px;top:57px;" width="28" height="31" viewBox="0 0 28 31"><rect x="1" y="3" width="20" height="24" rx="2" fill="#f2c56d" stroke="#c99a3e"/><rect x="6" y="1" width="10" height="4" rx="1" fill="#e8eaee" stroke="#6d6d6d"/><path d="M9.5 14 H24 L27 17 V30 H9.5 Z" fill="#fff" stroke="#707c8c"/><path d="M12 18 H23 M12 20.5 H23 M12 23 H23 M12 25.5 H23" stroke="#b9c1cc"/></svg>
<div style="left:13.00px;top:92.84px;font-size:12px;line-height:12px;color:#15428b;transform:scaleX(0.9057);transform-origin:0 0;white-space:pre;">Pegar</div>
<svg style="left:24.5px;top:110px;" width="6" height="4" viewBox="0 0 6 4"><path d="M0.5 0.5 L5.5 0.5 L3 3.5 Z" fill="#4c6d99"/></svg>
<svg style="left:54px;top:58px;" width="11" height="14" viewBox="0 0 11 14"><path d="M2 0 L6 8 M9 0 L5 8" stroke="#6c6c74" stroke-width="1.3"/><circle cx="3" cy="11" r="2.2" fill="none" stroke="#1f4fc0" stroke-width="1.6"/><circle cx="8" cy="11" r="2.2" fill="none" stroke="#1f4fc0" stroke-width="1.6"/></svg>
<div style="left:71.50px;top:58.84px;font-size:12px;line-height:12px;color:#15428b;transform:scaleX(0.9599);transform-origin:0 0;white-space:pre;">Cortar</div>
<svg style="left:52px;top:80px;" width="16" height="14" viewBox="0 0 16 14"><path d="M0.5 0.5 H6 L8 2.5 V9 H0.5 Z" fill="#fff" stroke="#6d7f98"/><path d="M1.5 3 H5 M1.5 5 H6 M1.5 7 H6" stroke="#4a78c8" stroke-width="0.8"/><path d="M6 4.5 H12.5 L15 7 V13.5 H6 Z" fill="#fff" stroke="#2d4f9c"/><path d="M7.5 8 H13 M7.5 10 H13 M7.5 12 H13" stroke="#4a78c8" stroke-width="0.9"/></svg>
<div style="left:71.50px;top:80.84px;font-size:12px;line-height:12px;color:#15428b;transform:scaleX(0.9619);transform-origin:0 0;white-space:pre;">Copiar</div>
<svg style="left:51px;top:101px;" width="18" height="17" viewBox="0 0 18 17"><path d="M10 9 L16 2" stroke="#6955b5" stroke-width="3.4"/><path d="M7 6 L12 11 L6 16 Q2 16 1 12 Z" fill="#e7d37a" stroke="#8a7a3a" stroke-width="0.8"/><path d="M8 7 L11 10" stroke="#aaa" stroke-width="2"/></svg>
<div style="left:71.50px;top:102.84px;font-size:12px;line-height:12px;color:#15428b;transform:scaleX(0.9703);transform-origin:0 0;white-space:pre;">Copiar formato</div>
<div style="left:164px;top:62px;width:97px;height:22px;border:1px solid #b3cae7;box-sizing:border-box;background:#eaf2fc"></div>
<div style="left:262px;top:62px;width:42px;height:22px;border:1px solid #b3cae7;box-sizing:border-box;background:#eaf2fc"></div>
<div style="left:167.50px;top:66.84px;font-size:12px;line-height:12px;color:#000;transform:scaleX(0.9410);transform-origin:0 0;white-space:pre;">Calibri</div>
<svg style="left:250.5px;top:71px;" width="6" height="4" viewBox="0 0 6 4"><path d="M0.5 0.5 L5.5 0.5 L3 3.5 Z" fill="#4c6d99"/></svg>
<div style="left:264.00px;top:66.84px;font-size:12px;line-height:12px;color:#000;transform:scaleX(0.9741);transform-origin:0 0;white-space:pre;">20</div>
<svg style="left:293.5px;top:71px;" width="6" height="4" viewBox="0 0 6 4"><path d="M0.5 0.5 L5.5 0.5 L3 3.5 Z" fill="#4c6d99"/></svg>
<div style="left:307px;top:62px;width:45px;height:22px;border:1px solid #a3bde3;border-radius:3px;box-sizing:border-box;background:linear-gradient(#e8f0fa,#d7e4f4 50%,#c9daf0 51%,#d5e3f4);"></div>
<div style="left:329px;top:63px;width:1px;height:20px;background:#b9cde8"></div>
<div style="left:312.00px;top:64.61px;font-size:17px;line-height:17px;color:#222;font-weight:bold;white-space:pre;font-family:'Liberation Serif',serif">A</div>
<svg style="left:320px;top:65px;" width="7" height="4" viewBox="0 0 7 4"><path d="M0 4 L3.5 0 L7 4 Z" fill="#3a6fc0"/></svg>
<div style="left:335.00px;top:68.84px;font-size:12px;line-height:12px;color:#222;font-weight:bold;white-space:pre;font-family:'Liberation Serif',serif">A</div>
<svg style="left:341px;top:66px;" width="7" height="4" viewBox="0 0 7 4"><path d="M0 0 L3.5 4 L7 0 Z" fill="#3a6fc0"/></svg>
<div style="left:164px;top:91px;width:80px;height:22px;border:1px solid #a3bde3;border-radius:3px;box-sizing:border-box;background:linear-gradient(#e8f0fa,#d7e4f4 50%,#c9daf0 51%,#d5e3f4);"></div>
<div style="left:186px;top:92px;width:1px;height:20px;background:#b9cde8"></div>
<div style="left:210px;top:92px;width:1px;height:20px;background:#b9cde8"></div>
<div style="left:170.00px;top:95.15px;font-size:14px;line-height:14px;color:#000;font-weight:bold;white-space:pre;font-family:'Liberation Serif',serif">N</div>
<div style="left:193.00px;top:95.15px;font-size:14px;line-height:14px;color:#000;font-weight:bold;white-space:pre;font-family:'Liberation Serif',serif;font-style:italic">K</div>
<div style="left:217.00px;top:95.15px;font-size:14px;line-height:14px;color:#000;font-weight:bold;white-space:pre;font-family:'Liberation Serif',serif;text-decoration:underline">S</div>
<svg style="left:234.5px;top:101px;" width="6" height="4" viewBox="0 0 6 4"><path d="M0.5 0.5 L5.5 0.5 L3 3.5 Z" fill="#4c6d99"/></svg>
<div style="left:247px;top:91px;width:36px;height:22px;border:1px solid #a3bde3;border-radius:3px;box-sizing:border-box;background:linear-gradient(#e8f0fa,#d7e4f4 50%,#c9daf0 51%,#d5e3f4);"></div>
<svg style="left:252px;top:95px;" width="15" height="16" viewBox="0 0 15 16"><path d="M0.5 0.5 H14 V13 H0.5 Z M7 0.5 V13 M0.5 7 H14" stroke="#777" stroke-dasharray="1 1" fill="none"/><rect x="0" y="13" width="14" height="2" fill="#222"/></svg>
<svg style="left:272.5px;top:101px;" width="6" height="4" viewBox="0 0 6 4"><path d="M0.5 0.5 L5.5 0.5 L3 3.5 Z" fill="#4c6d99"/></svg>
<div style="left:285px;top:91px;width:67px;height:22px;border:1px solid #a3bde3;border-radius:3px;box-sizing:border-box;background:linear-gradient(#e8f0fa,#d7e4f4 50%,#c9daf0 51%,#d5e3f4);"></div>
<div style="left:318px;top:92px;width:1px;height:20px;background:#b9cde8"></div>
<svg style="left:290px;top:94px;" width="18" height="17" viewBox="0 0 18 17"><path d="M3 7 L8 2 L14 8 L9 13 Z" fill="#fff" stroke="#333" stroke-width="1"/><path d="M14 8 Q17 10 16 13" stroke="#2d5fc0" stroke-width="2" fill="none"/><rect x="0" y="13" width="16" height="3.5" fill="#ffff00"/></svg>
<svg style="left:310px;top:101px;" width="6" height="4" viewBox="0 0 6 4"><path d="M0.5 0.5 L5.5 0.5 L3 3.5 Z" fill="#4c6d99"/></svg>
<svg style="left:322px;top:93px;" width="16" height="18" viewBox="0 0 16 18"><path d="M2 12 L7 1 L9 1 L14 12 M4.5 8 H11.5" stroke="#1b3fb0" stroke-width="2.6" fill="none"/><rect x="0" y="13.5" width="15" height="3.5" fill="#ff0000"/></svg>
<svg style="left:342.5px;top:101px;" width="6" height="4" viewBox="0 0 6 4"><path d="M0.5 0.5 L5.5 0.5 L3 3.5 Z" fill="#4c6d99"/></svg>
<div style="left:363px;top:62px;width:69px;height:22px;border:1px solid #a3bde3;border-radius:3px;box-sizing:border-box;background:linear-gradient(#e8f0fa,#d7e4f4 50%,#c9daf0 51%,#d5e3f4);"></div>
<div style="left:386px;top:63px;width:1px;height:20px;background:#b9cde8"></div>
<div style="left:409px;top:63px;width:1px;height:20px;background:#b9cde8"></div>
<div style="left:410px;top:63px;width:21px;height:20px;background:linear-gradient(#fdd68a,#fbb94a 50%,#f9a935 51%,#fdd68a);border-radius:0 2px 2px 0"></div>
<svg style="left:367px;top:66px;" width="16" height="14" viewBox="0 0 16 14"><path d="M2 1.5 H12 M3 4 H11 M2 6.5 H12" stroke="#000" stroke-width="1.2"/></svg>
<svg style="left:390px;top:66px;" width="16" height="14" viewBox="0 0 16 14"><path d="M3 5 H13 M3 7.5 H13 M3 10 H13" stroke="#000" stroke-width="1.2"/></svg>
<svg style="left:413px;top:66px;" width="16" height="14" viewBox="0 0 16 14"><path d="M3 8 H13 M3 10.5 H13 M3 13 H13" stroke="#000" stroke-width="1.2"/></svg>
<div style="left:436px;top:62px;width:32px;height:22px;border:1px solid #a3bde3;border-radius:3px;box-sizing:border-box;background:linear-gradient(#e8f0fa,#d7e4f4 50%,#c9daf0 51%,#d5e3f4);"></div>
<svg style="left:439px;top:65px;" width="18" height="16" viewBox="0 0 18 16"><text x="2" y="13" font-size="10" font-family="Liberation Sans" fill="#000" transform="rotate(-40 7 9)">ab</text><path d="M8 13 L16 5" stroke="#444" stroke-width="1"/><path d="M13 5 H16 V8" stroke="#444" fill="none"/></svg>
<svg style="left:458.5px;top:71px;" width="6" height="4" viewBox="0 0 6 4"><path d="M0.5 0.5 L5.5 0.5 L3 3.5 Z" fill="#4c6d99"/></svg>
<div style="left:363px;top:91px;width:69px;height:22px;border:1px solid #a3bde3;border-radius:3px;box-sizing:border-box;background:linear-gradient(#e8f0fa,#d7e4f4 50%,#c9daf0 51%,#d5e3f4);"></div>
<div style="left:386px;top:92px;width:1px;height:20px;background:#b9cde8"></div>
<div style="left:409px;top:92px;width:1px;height:20px;background:#b9cde8"></div>
<svg style="left:367px;top:95px;" width="16" height="14" viewBox="0 0 16 14"><path d="M2 2 H12 M2 4.5 H9 M2 7 H12 M2 9.5 H9 M2 12 H12" stroke="#000" stroke-width="1.2"/></svg>
<svg style="left:390px;top:95px;" width="16" height="14" viewBox="0 0 16 14"><path d="M3 2 H13 M4.5 4.5 H11.5 M3 7 H13 M4.5 9.5 H11.5 M3 12 H13" stroke="#000" stroke-width="1.2"/></svg>
<svg style="left:413px;top:95px;" width="16" height="14" viewBox="0 0 16 14"><path d="M3 2 H13 M6 4.5 H13 M3 7 H13 M6 9.5 H13 M3 12 H13" stroke="#000" stroke-width="1.2"/></svg>
<div style="left:436px;top:91px;width:45px;height:22px;border:1px solid #a3bde3;border-radius:3px;box-sizing:border-box;background:linear-gradient(#e8f0fa,#d7e4f4 50%,#c9daf0 51%,#d5e3f4);"></div>
<div style="left:458px;top:92px;width:1px;height:20px;background:#b9cde8"></div>
<svg style="left:439px;top:94px;" width="17" height="16" viewBox="0 0 17 16"><path d="M6 2 H15 M8 5 H15 M8 8 H15 M6 11 H15" stroke="#000" stroke-width="1.4"/><path d="M1 6.5 H6 M1 6.5 L4 4 M1 6.5 L4 9" stroke="#3a70d0" stroke-width="1.3" fill="none"/></svg>
<svg style="left:461px;top:94px;" width="17" height="16" viewBox="0 0 17 16"><path d="M6 2 H15 M8 5 H15 M8 8 H15 M6 11 H15" stroke="#000" stroke-width="1.4"/><path d="M0 6.5 H6 M6 6.5 L3 4 M6 6.5 L3 9" stroke="#3a70d0" stroke-width="1.3" fill="none"/></svg>
<div style="left:484px;top:59px;width:1px;height:56px;background:#a8c1e0;box-shadow:1px 0 0 #eef4fb"></div>
<svg style="left:490px;top:65px;" width="18" height="16" viewBox="0 0 18 16"><rect x="0.5" y="0.5" width="12" height="14" fill="#fff" stroke="#6b7a8c"/><path d="M2 3 H16 M2 6 H10 M2 9 H10 M2 12 H8" stroke="#c67a30" stroke-width="1.2"/><path d="M14 6 V10 L11.5 10" stroke="#333" fill="none"/></svg>
<div style="left:510.00px;top:66.84px;font-size:12px;line-height:12px;color:#15428b;transform:scaleX(0.9746);transform-origin:0 0;white-space:pre;">Ajustar texto</div>
<svg style="left:490px;top:94px;" width="18" height="16" viewBox="0 0 18 16"><rect x="0.5" y="0.5" width="16" height="14" fill="#fff" stroke="#6b7a8c"/><path d="M0.5 4 H16.5 M0.5 11 H16.5 M5.5 0.5 V4 M11 0.5 V4 M5.5 11 V14.5 M11 11 V14.5" stroke="#6b7a8c"/><text x="5" y="10.5" font-size="8" font-weight="bold" font-family="Liberation Serif" fill="#000">a</text><path d="M1.5 7.5 H4 M13 7.5 H15.5" stroke="#333"/></svg>
<div style="left:510.00px;top:95.84px;font-size:12px;line-height:12px;color:#15428b;transform:scaleX(0.9507);transform-origin:0 0;white-space:pre;">Combinar y centrar</div>
<svg style="left:611.5px;top:100px;" width="6" height="4" viewBox="0 0 6 4"><path d="M0.5 0.5 L5.5 0.5 L3 3.5 Z" fill="#4c6d99"/></svg>
<div style="left:632px;top:62px;width:128px;height:22px;border:1px solid #b3cae7;box-sizing:border-box;background:#eaf2fc"></div>
<div style="left:636.00px;top:66.84px;font-size:12px;line-height:12px;color:#000;transform:scaleX(0.9373);transform-origin:0 0;white-space:pre;">Número</div>
<svg style="left:749px;top:71px;" width="6" height="4" viewBox="0 0 6 4"><path d="M0.5 0.5 L5.5 0.5 L3 3.5 Z" fill="#4c6d99"/></svg>
<div style="left:632px;top:91px;width:80px;height:22px;border:1px solid #a3bde3;border-radius:3px;box-sizing:border-box;background:linear-gradient(#e8f0fa,#d7e4f4 50%,#c9daf0 51%,#d5e3f4);"></div>
<div style="left:664px;top:92px;width:1px;height:20px;background:#b9cde8"></div>
<div style="left:690px;top:92px;width:1px;height:20px;background:#b9cde8"></div>
<svg style="left:636px;top:94px;" width="18" height="16" viewBox="0 0 18 16"><rect x="0.5" y="0.5" width="15" height="7" fill="#5a7fc8" stroke="#2d4c8c"/><ellipse cx="8" cy="4" rx="3" ry="2" fill="none" stroke="#fff"/><ellipse cx="11" cy="10" rx="4" ry="1.5" fill="#f0b030"/><ellipse cx="11" cy="12.5" rx="4" ry="1.5" fill="#e8a020"/><ellipse cx="11" cy="15" rx="4" ry="1.5" fill="#d89010"/><path d="M2 11 H6" stroke="#f0b030" stroke-width="1.5"/></svg>
<svg style="left:656px;top:100px;" width="6" height="4" viewBox="0 0 6 4"><path d="M0.5 0.5 L5.5 0.5 L3 3.5 Z" fill="#4c6d99"/></svg>
<div style="left:672.00px;top:96.00px;font-size:13px;line-height:13px;color:#111;white-space:pre;">%</div>
<div style="left:694.00px;top:97.69px;font-size:11px;line-height:11px;color:#111;transform:scaleX(0.7629);transform-origin:0 0;white-space:pre;">000</div>
<div style="left:715px;top:91px;width:45px;height:22px;border:1px solid #a3bde3;border-radius:3px;box-sizing:border-box;background:linear-gradient(#e8f0fa,#d7e4f4 50%,#c9daf0 51%,#d5e3f4);"></div>
<div style="left:737px;top:92px;width:1px;height:20px;background:#b9cde8"></div>
<svg style="left:719px;top:94px;" width="16" height="16" viewBox="0 0 16 16"><text x="8" y="7" font-size="7" font-family="Liberation Sans" fill="#000">0</text><text x="6" y="13" font-size="7" font-family="Liberation Sans" fill="#000">00</text><path d="M1 4 H6 M1 4 L3 2 M1 4 L3 6" stroke="#3a70d0" fill="none"/></svg>
<svg style="left:741px;top:94px;" width="16" height="16" viewBox="0 0 16 16"><text x="7" y="7" font-size="7" font-family="Liberation Sans" fill="#000">00</text><text x="10" y="13" font-size="7" font-family="Liberation Sans" fill="#000">0</text><path d="M2 11 H8 M8 11 L6 9 M8 11 L6 13" stroke="#3a70d0" fill="none"/></svg>
<svg style="left:791px;top:59px;" width="31" height="29" viewBox="0 0 31 29"><rect x="0.5" y="0.5" width="27" height="24" fill="#fff" stroke="#9aa6b6"/><rect x="7.25" y="0.5" width="6.75" height="6" fill="#ee5040"/><rect x="7.25" y="6.5" width="13.5" height="6" fill="#5f8ee0"/><rect x="7.25" y="12.5" width="13.5" height="6" fill="#ee5040"/><rect x="7.25" y="18.5" width="6.75" height="6" fill="#5f8ee0"/><path d="M0.5 6.5 H27.5 M0.5 12.5 H27.5 M0.5 18.5 H27.5 M7.25 0.5 V24.5 M14 0.5 V24.5 M20.75 0.5 V24.5" stroke="#b8c2ce" stroke-width="0.8"/><rect x="14.5" y="15.5" width="15" height="12" fill="#fff" stroke="#5a6470"/><path d="M20 18 L17 19.5 L20 21 M17 22.5 H20 M17 24.5 H20 M22 18.5 H26 M22 20.5 H26 M25 17.5 L23 21.5 M22 22.5 L25 24 L22 25.5" stroke="#111" stroke-width="0.9" fill="none"/></svg>
<svg style="left:863px;top:59px;" width="33" height="30" viewBox="0 0 33 30"><rect x="0.5" y="0.5" width="28" height="24" fill="#fff" stroke="#9aa6b6"/><rect x="7.5" y="6.5" width="21" height="18" fill="#a4c0f0"/><path d="M0.5 6.5 H28.5 M0.5 12.5 H28.5 M0.5 18.5 H28.5 M7.5 0.5 V24.5 M14.5 0.5 V24.5 M21.5 0.5 V24.5" stroke="#c9d3e0" stroke-width="0.8"/><path d="M30.5 7 L21 18" stroke="#d8d8d8" stroke-width="3.2"/><path d="M30.5 7 L21 18" stroke="#8a8a8a" stroke-width="0.8"/><path d="M18 17 L22.5 20.5 L20 23 L16 20 Z" fill="#a8884a"/><path d="M16 20 L20 23 Q16 28 10 28.5 Q12 24 16 20 Z" fill="#4a7ad0"/></svg>
<div style="left:785.00px;top:92.84px;font-size:12px;line-height:12px;color:#15428b;transform:scaleX(0.9401);transform-origin:0 0;white-space:pre;">Formato</div>
<div style="left:773.00px;top:105.84px;font-size:12px;line-height:12px;color:#15428b;white-space:pre;">condicional</div>
<svg style="left:835.5px;top:111px;" width="6" height="4" viewBox="0 0 6 4"><path d="M0.5 0.5 L5.5 0.5 L3 3.5 Z" fill="#4c6d99"/></svg>
<svg style="left:862px;top:58px;" width="33" height="31" viewBox="0 0 33 31"><rect x="0.5" y="0.5" width="27" height="24" fill="#fff" stroke="#a9b4c2"/><rect x="7" y="7" width="21" height="18" fill="#9db8ec"/><path d="M0.5 7 H27.5 M0.5 13 H27.5 M0.5 19 H27.5 M7 0.5 V24.5 M14 0.5 V24.5 M21 0.5 V24.5" stroke="#c7d1de"/><path d="M30 4 L18 22" stroke="#c0c0c0" stroke-width="3"/><path d="M18 22 L13 29 L20 26 Z" fill="#3f6fd0"/></svg>
<div style="left:847.00px;top:92.84px;font-size:12px;line-height:12px;color:#15428b;transform:scaleX(0.9630);transform-origin:0 0;white-space:pre;">Dar formato</div>
<div style="left:846.50px;top:105.84px;font-size:12px;line-height:12px;color:#15428b;transform:scaleX(0.9541);transform-origin:0 0;white-space:pre;">como tabla</div>
<svg style="left:905.5px;top:111px;" width="6" height="4" viewBox="0 0 6 4"><path d="M0.5 0.5 L5.5 0.5 L3 3.5 Z" fill="#4c6d99"/></svg>
<div style="left:915px;top:57px;width:532px;height:60px;border:1px solid #b9d0ec;box-sizing:border-box;background:#d6e5f6"></div>
<div style="left:917px;top:59px;width:105px;height:28px;box-sizing:border-box;background:#fff;border:2px solid #f3b54a;box-shadow:inset 0 0 0 1px #fff2cc"></div>
<div style="left:924.00px;top:67.00px;font-size:13px;line-height:13px;color:#000;transform:scaleX(1.0742);transform-origin:0 0;white-space:pre;">Normal</div>
<div style="left:1025px;top:62px;width:100px;height:22px;box-sizing:border-box;background:#c6efce"></div>
<div style="left:1031.00px;top:67.00px;font-size:13px;line-height:13px;color:#006100;transform:scaleX(0.9843);transform-origin:0 0;white-space:pre;">Buena</div>
<div style="left:1131px;top:62px;width:100px;height:22px;box-sizing:border-box;background:#ffc7ce"></div>
<div style="left:1137.00px;top:67.00px;font-size:13px;line-height:13px;color:#9c0006;transform:scaleX(1.0727);transform-origin:0 0;white-space:pre;">Incorrecto</div>
<div style="left:1237px;top:62px;width:100px;height:22px;box-sizing:border-box;background:#ffeb9c"></div>
<div style="left:1243.00px;top:67.00px;font-size:13px;line-height:13px;color:#9c6500;transform:scaleX(1.0739);transform-origin:0 0;white-space:pre;">Neutral</div>
<div style="left:1343px;top:62px;width:100px;height:22px;box-sizing:border-box;background:#f2f2f2;border:1px solid #7f7f7f"></div>
<div style="left:1349.00px;top:67.00px;font-size:13px;line-height:13px;color:#fa7d00;font-weight:bold;transform:scaleX(1.0224);transform-origin:0 0;white-space:pre;">Cálculo</div>
<div style="left:919px;top:90px;width:100px;height:22px;box-sizing:border-box;background:#a5a5a5;border:3px double #3f3f3f"></div>
<div style="left:925.00px;top:95.00px;font-size:13px;line-height:13px;color:#fff;font-weight:bold;transform:scaleX(0.9786);transform-origin:0 0;white-space:pre;">Celda de co...</div>
<div style="left:1025px;top:90px;width:100px;height:22px;box-sizing:border-box;background:#fff;border-bottom:2px solid #ff8001"></div>
<div style="left:1031.00px;top:95.00px;font-size:13px;line-height:13px;color:#fa7d00;transform:scaleX(1.0533);transform-origin:0 0;white-space:pre;">Celda vincul...</div>
<div style="left:1131px;top:90px;width:100px;height:22px;box-sizing:border-box;background:#ffcc99;border:1px solid #7f7f7f"></div>
<div style="left:1137.00px;top:95.00px;font-size:13px;line-height:13px;color:#3f3f76;transform:scaleX(1.0763);transform-origin:0 0;white-space:pre;">Entrada</div>
<div style="left:1237px;top:90px;width:100px;height:22px;box-sizing:border-box;background:#ffffcc;border:1px solid #b2b2b2"></div>
<div style="left:1243.00px;top:95.00px;font-size:13px;line-height:13px;color:#000;transform:scaleX(1.1190);transform-origin:0 0;white-space:pre;">Notas</div>
<div style="left:1343px;top:90px;width:100px;height:22px;box-sizing:border-box;background:#f2f2f2;border:1px solid #3f3f3f"></div>
<div style="left:1349.00px;top:95.00px;font-size:13px;line-height:13px;color:#3f3f3f;font-weight:bold;transform:scaleX(1.0185);transform-origin:0 0;white-space:pre;">Salida</div>
<div style="left:1447px;top:58px;width:14px;height:58px;border:1px solid #c4d6ee;border-radius:2px;box-sizing:border-box;background:linear-gradient(90deg,#dfeaf7,#cbdcf1)"></div>
<div style="left:1448px;top:77px;width:12px;height:1px;background:#b8cde8"></div>
<div style="left:1448px;top:97px;width:12px;height:1px;background:#b8cde8"></div>
<svg style="left:1450px;top:65px;" width="8" height="5" viewBox="0 0 8 5"><path d="M0.5 4.5 L4 0.5 L7.5 4.5 Z" fill="#a8b8cc"/></svg>
<svg style="left:1451px;top:86px;" width="6" height="4" viewBox="0 0 6 4"><path d="M0.5 0.5 L5.5 0.5 L3 3.5 Z" fill="#4c6d99"/></svg>
<div style="left:1451px;top:103px;width:6px;height:1px;background:#4c6d99"></div>
<svg style="left:1451px;top:106px;" width="6" height="4" viewBox="0 0 6 4"><path d="M0.5 0.5 L5.5 0.5 L3 3.5 Z" fill="#4c6d99"/></svg>
<svg style="left:1481px;top:58px;" width="32" height="28" viewBox="0 0 32 28"><rect x="1.5" y="1.5" width="14" height="5" fill="#fff" stroke="#5f6b7a"/><path d="M8.5 1.5 V6.5" stroke="#5f6b7a"/><rect x="16.5" y="8.5" width="14" height="6" fill="#6a96e0" stroke="#4a6fb0"/><path d="M23.5 8.5 V14.5" stroke="#4a6fb0"/><path d="M7 11.5 H15 M7 11.5 L10 9 M7 11.5 L10 14" stroke="#222" stroke-width="1.2" fill="none"/><rect x="1.5" y="16.5" width="14" height="10" fill="#fff" stroke="#5f6b7a"/><path d="M8.5 16.5 V26.5 M1.5 21.5 H15.5" stroke="#5f6b7a"/></svg>
<div style="left:1478.00px;top:92.84px;font-size:12px;line-height:12px;color:#15428b;transform:scaleX(0.9587);transform-origin:0 0;white-space:pre;">Insertar</div>
<svg style="left:1494.5px;top:110px;" width="6" height="4" viewBox="0 0 6 4"><path d="M0.5 0.5 L5.5 0.5 L3 3.5 Z" fill="#4c6d99"/></svg>
<svg style="left:1529px;top:58px;" width="28" height="28" viewBox="0 0 28 28"><rect x="1.5" y="1.5" width="14" height="5" fill="#fff" stroke="#5f6b7a"/><path d="M8.5 1.5 V6.5" stroke="#5f6b7a"/><rect x="6.5" y="8.5" width="11" height="6" fill="#dfe6ee" stroke="#1f3f8f" stroke-dasharray="1 1"/><rect x="1.5" y="16.5" width="14" height="10" fill="#fff" stroke="#5f6b7a"/><path d="M8.5 16.5 V26.5 M1.5 21.5 H15.5" stroke="#5f6b7a"/><path d="M14 17 L24 7 M14.5 7.5 L24 16" stroke="#ee3a1a" stroke-width="1.8"/></svg>
<div style="left:1522.00px;top:92.84px;font-size:12px;line-height:12px;color:#15428b;transform:scaleX(0.9460);transform-origin:0 0;white-space:pre;">Eliminar</div>
<svg style="left:1539.5px;top:110px;" width="6" height="4" viewBox="0 0 6 4"><path d="M0.5 0.5 L5.5 0.5 L3 3.5 Z" fill="#4c6d99"/></svg>
<svg style="left:1573px;top:58px;" width="32" height="30" viewBox="0 0 32 30"><path d="M1.5 0 V3 M25.5 0 V3" stroke="#222"/><path d="M1.5 1.5 H25.5" stroke="#222" stroke-dasharray="1 1.2"/><path d="M8 1.5 H19" stroke="#222"/><rect x="1.5" y="4.5" width="28" height="21" rx="1" fill="#f4f7fb" stroke="#6b7788"/><rect x="9.5" y="9.5" width="8" height="10" fill="#6a96e0"/><path d="M1.5 9.5 H29.5 M1.5 19.5 H29.5 M9.5 4.5 V25.5 M17.5 4.5 V25.5 M25.5 4.5 V25.5" stroke="#9aa6b6"/><rect x="2.5" y="25" width="7" height="3" rx="1" fill="#fff" stroke="#8a96a5"/><rect x="10" y="25" width="7" height="3" rx="1" fill="#fff" stroke="#8a96a5"/></svg>
<div style="left:1568.00px;top:92.84px;font-size:12px;line-height:12px;color:#15428b;transform:scaleX(0.9625);transform-origin:0 0;white-space:pre;">Formato</div>
<svg style="left:1586.5px;top:110px;" width="6" height="4" viewBox="0 0 6 4"><path d="M0.5 0.5 L5.5 0.5 L3 3.5 Z" fill="#4c6d99"/></svg>
<div style="left:1630.00px;top:59.00px;font-size:13px;line-height:13px;color:#111;font-weight:bold;white-space:pre;">Σ</div>
<div style="left:1647.00px;top:58.84px;font-size:12px;line-height:12px;color:#15428b;transform:scaleX(0.9625);transform-origin:0 0;white-space:pre;">Autosuma</div>
<svg style="left:1703.5px;top:64px;" width="6" height="4" viewBox="0 0 6 4"><path d="M0.5 0.5 L5.5 0.5 L3 3.5 Z" fill="#4c6d99"/></svg>
<svg style="left:1628px;top:79px;" width="14" height="16" viewBox="0 0 14 16"><rect x="0.5" y="0.5" width="12" height="15" fill="#dfe9f6" stroke="#4a6da8"/><rect x="2" y="1.5" width="9" height="2" fill="#7aa4e0"/><path d="M6.5 5 V12 M3.5 9 L6.5 12.5 L9.5 9" stroke="#1f5fd0" stroke-width="2" fill="none"/></svg>
<div style="left:1647.00px;top:80.84px;font-size:12px;line-height:12px;color:#15428b;transform:scaleX(0.9399);transform-origin:0 0;white-space:pre;">Rellenar</div>
<svg style="left:1692.5px;top:86px;" width="6" height="4" viewBox="0 0 6 4"><path d="M0.5 0.5 L5.5 0.5 L3 3.5 Z" fill="#4c6d99"/></svg>
<svg style="left:1628px;top:102px;" width="16" height="15" viewBox="0 0 16 15"><path d="M2 11 L9 2 Q11 0.5 13 2 L15 4 Q15.5 6 14 7 L7 13 Z" fill="#fff" stroke="#666"/><path d="M2 11 L6 14 L7 13" fill="#ccc" stroke="#666"/><path d="M6 14.5 H15" stroke="#222"/></svg>
<div style="left:1647.00px;top:102.84px;font-size:12px;line-height:12px;color:#15428b;transform:scaleX(0.9899);transform-origin:0 0;white-space:pre;">Borrar</div>
<svg style="left:1682.5px;top:108px;" width="6" height="4" viewBox="0 0 6 4"><path d="M0.5 0.5 L5.5 0.5 L3 3.5 Z" fill="#4c6d99"/></svg>
<svg style="left:1721px;top:57px;" width="32" height="30" viewBox="0 0 32 30"><text x="1" y="13" font-size="14" font-weight="bold" font-family="Liberation Serif" fill="#3f6fc8">A</text><text x="1" y="28" font-size="14" font-weight="bold" font-family="Liberation Serif" fill="#c0392b">Z</text><path d="M10 6 H30 L22 15 V25 L17 27 V15 Z" fill="#c9ced6" stroke="#8a929c"/></svg>
<div style="left:1715.00px;top:92.84px;font-size:12px;line-height:12px;color:#15428b;transform:scaleX(0.9769);transform-origin:0 0;white-space:pre;">Ordenar</div>
<div style="left:1715.00px;top:105.84px;font-size:12px;line-height:12px;color:#15428b;white-space:pre;">y filtrar</div>
<svg style="left:1753.5px;top:111px;" width="6" height="4" viewBox="0 0 6 4"><path d="M0.5 0.5 L5.5 0.5 L3 3.5 Z" fill="#4c6d99"/></svg>
<svg style="left:1781px;top:59px;" width="30" height="28" viewBox="0 0 30 28"><defs><linearGradient id="bn" x1="0" y1="0" x2="1" y2="0"><stop offset="0" stop-color="#c9d8ee"/><stop offset="0.45" stop-color="#8aa3c9"/><stop offset="1" stop-color="#34507e"/></linearGradient></defs><g fill="url(#bn)" stroke="#3c5478" stroke-width="0.8"><rect x="8" y="1" width="5" height="4" rx="1"/><rect x="17" y="1" width="5" height="4" rx="1"/><rect x="6" y="5" width="8" height="8" rx="1.5"/><rect x="16" y="5" width="8" height="8" rx="1.5"/><rect x="1" y="12" width="12" height="14" rx="2"/><rect x="17" y="12" width="12" height="14" rx="2"/><rect x="12.5" y="12" width="5" height="6" fill="#4a6494"/></g></svg>
<div style="left:1775.00px;top:92.84px;font-size:12px;line-height:12px;color:#15428b;transform:scaleX(0.8997);transform-origin:0 0;white-space:pre;">Buscar y</div>
<div style="left:1764.00px;top:105.84px;font-size:12px;line-height:12px;color:#15428b;transform:scaleX(0.9556);transform-origin:0 0;white-space:pre;">seleccionar</div>
<svg style="left:1823.5px;top:111px;" width="6" height="4" viewBox="0 0 6 4"><path d="M0.5 0.5 L5.5 0.5 L3 3.5 Z" fill="#4c6d99"/></svg>
<div style="left:0px;top:142px;width:1920px;height:1px;background:#6f8fb3"></div>
<div style="left:0px;top:143px;width:1920px;height:20px;background:#fff"></div>
<div style="left:0px;top:163px;width:1920px;height:1px;background:#6f8fb3"></div>
<div style="left:0px;top:164px;width:1920px;height:3px;background:#dfe9f5"></div>
<div style="left:61.00px;top:147.84px;font-size:12px;line-height:12px;color:#000;transform:scaleX(1.0338);transform-origin:0 0;white-space:pre;">J22</div>
<svg style="left:145px;top:151px;" width="9" height="5" viewBox="0 0 9 5"><path d="M0 0 H9 L4.5 5 Z" fill="#000"/></svg>
<svg style="left:158px;top:143px;" width="86" height="20" viewBox="0 0 86 20"><defs><linearGradient id="fxg" x1="0" y1="0" x2="0" y2="1"><stop offset="0" stop-color="#fafcff"/><stop offset="0.5" stop-color="#dbe6f4"/><stop offset="1" stop-color="#a9c3e6"/></linearGradient></defs><path d="M11 0.5 H85.5 V19.5 H11 Q0.5 19.5 0.5 10 Q0.5 0.5 11 0.5 Z" fill="url(#fxg)" stroke="#87a6cc"/><circle cx="11" cy="10" r="4" fill="#c9c9c9"/></svg>
<div style="left:224.00px;top:145.15px;font-size:14px;line-height:14px;color:#555;white-space:pre;font-family:'Liberation Serif',serif;font-style:italic;font-weight:bold">f</div>
<div style="left:229.00px;top:148.53px;font-size:10px;line-height:10px;color:#555;white-space:pre;font-family:'Liberation Serif',serif;font-style:italic;font-weight:bold">x</div>
<div style="left:243px;top:143px;width:1px;height:20px;background:#87a6cc"></div>
<div style="left:252.00px;top:147.84px;font-size:12px;line-height:12px;color:#000;transform:scaleX(1.0504);transform-origin:0 0;white-space:pre;">=H22+(E22*B22)</div>
<div style="left:1904px;top:143px;width:15px;height:20px;border:1px solid #b3c6de;box-sizing:border-box;background:linear-gradient(#f4f7fb,#c9d8ea)"></div>
<svg style="left:1907px;top:148px;" width="10" height="10" viewBox="0 0 10 10"><path d="M1 1 L4.5 4 L8 1 M1 5 L4.5 8 L8 5" stroke="#000" stroke-width="1.6" fill="none"/></svg>
<div style="left:1916px;top:167px;width:4px;height:993px;background:#adc8ec"></div>
<div style="left:0px;top:1122px;width:1917px;height:16px;background:linear-gradient(#c9daf0,#b5cbe8)"></div>
<div style="left:0px;top:1122px;width:1917px;height:1px;background:#8fa9cc"></div>
<div style="left:0px;top:1138px;width:1917px;height:1px;background:#5a82b5"></div>
<div style="left:0px;top:1123px;width:62px;height:14px;background:linear-gradient(#e4edf8,#cddcf0)"></div>
<div style="left:62px;top:1122px;width:1px;height:15px;background:#8fa9cc"></div>
<svg style="left:6px;top:1125px;" width="7" height="9" viewBox="0 0 7 9"><rect x="0" y="0.5" width="1.5" height="8" fill="#1e3f8a"/><path d="M7 0.5 V8.5 L2 4.5 Z" fill="#1e3f8a"/></svg>
<svg style="left:21px;top:1125px;" width="6" height="9" viewBox="0 0 6 9"><path d="M5.5 0.5 V8.5 L0.5 4.5 Z" fill="#1e3f8a"/></svg>
<svg style="left:36px;top:1125px;" width="6" height="9" viewBox="0 0 6 9"><path d="M0.5 0.5 V8.5 L5.5 4.5 Z" fill="#1e3f8a"/></svg>
<svg style="left:50px;top:1125px;" width="7" height="9" viewBox="0 0 7 9"><rect x="5.5" y="0.5" width="1.5" height="8" fill="#1e3f8a"/><path d="M0 0.5 V8.5 L5 4.5 Z" fill="#1e3f8a"/></svg>
<div style="left:63px;top:1123px;width:1077px;height:15px;background:linear-gradient(#a3bce0,#9db6dc 60%,#97b2da)"></div>
<svg style="left:62px;top:1122px;" width="210" height="16" viewBox="0 0 210 16"><defs><linearGradient id="tg" x1="0" y1="0" x2="0" y2="1"><stop offset="0" stop-color="#e6effa"/><stop offset="0.5" stop-color="#d3e2f5"/><stop offset="1" stop-color="#c0d5f0"/></linearGradient><linearGradient id="tw" x1="0" y1="0" x2="0" y2="1"><stop offset="0" stop-color="#ffffff"/><stop offset="0.7" stop-color="#f6f9fd"/><stop offset="1" stop-color="#d6e4f5"/></linearGradient></defs><path d="M49 15.5 L63 0.5 L199 0.5 L186 15.5 Z" fill="url(#tg)" stroke="#8fa9cc"/><path d="M101 15.5 L115 0.5 M154 15.5 L166 0.5" stroke="#8fa9cc" fill="none"/><path d="M0 0 L63 0 L49 15.5 L0 15.5 Z" fill="url(#tw)"/><path d="M49 15.5 L63 0.5" stroke="#8fa9cc" fill="none"/></svg>
<div style="left:72.50px;top:1124.84px;font-size:12px;line-height:12px;color:#15428b;font-weight:bold;transform:scaleX(1.0711);transform-origin:0 0;white-space:pre;">Hoja1</div>
<div style="left:126.00px;top:1124.84px;font-size:12px;line-height:12px;color:#15428b;white-space:pre;">Hoja2</div>
<div style="left:178.00px;top:1124.84px;font-size:12px;line-height:12px;color:#15428b;transform:scaleX(0.9888);transform-origin:0 0;white-space:pre;">Hoja3</div>
<svg style="left:231px;top:1124px;" width="14" height="12" viewBox="0 0 14 12"><path d="M3.5 4.5 H12.5 V10.5 H5 L3.5 11.5 Z" fill="#fff" stroke="#7a8898"/><circle cx="4" cy="3.5" r="2.6" fill="#f5b400"/><circle cx="4" cy="3.5" r="1.2" fill="#fff3b0"/></svg>
<div style="left:1147px;top:1123px;width:753px;height:15px;background:#7797c2"></div>
<div style="left:1140px;top:1123px;width:7px;height:15px;background:#fff;border:1px solid #6e8fb8;box-sizing:border-box"></div>
<div style="left:1143px;top:1127px;width:1px;height:7px;background:#4a6a98"></div>
<svg style="left:1152px;top:1125px;" width="6" height="10" viewBox="0 0 6 10"><path d="M5.5 0.5 V9.5 L0.5 5 Z" fill="#414a6a"/></svg>
<div style="left:1165px;top:1123px;width:621px;height:15px;border:1px solid #5a6c88;border-radius:2px;box-sizing:border-box;background:linear-gradient(#f6f7f9,#e3e8ee 45%,#c3cfdc 50%,#b7c4d4)"></div>
<svg style="left:1471px;top:1126px;" width="8" height="8" viewBox="0 0 8 8"><path d="M0.5 0 V8 M2.5 0 V8 M4.5 0 V8 M6.5 0 V8" stroke="#8596ad"/></svg>
<div style="left:1786px;top:1123px;width:114px;height:15px;background:#7797c2"></div>
<svg style="left:1880px;top:1126px;" width="6" height="9" viewBox="0 0 6 9"><path d="M0.5 0.5 V8.5 L5.5 4.5 Z" fill="#3c4e6a"/></svg>
<div style="left:1893px;top:1123px;width:7px;height:15px;background:#fff;border:1px solid #6e8fb8;box-sizing:border-box"></div>
<div style="left:1896px;top:1127px;width:1px;height:7px;background:#4a6a98"></div>
<div style="left:1900px;top:167px;width:16px;height:955px;background:#7797c2"></div>
<div style="left:1900px;top:188px;width:1px;height:934px;background:#a9c6ea"></div>
<div style="left:1902px;top:169px;width:13px;height:7px;background:#fff;border:1px solid #6e8fb8;box-sizing:border-box"></div>
<div style="left:1905px;top:171px;width:7px;height:1px;background:#5b7bab"></div>
<svg style="left:1904px;top:182px;" width="10" height="6" viewBox="0 0 10 6"><path d="M0 5.5 L5 0.5 L10 5.5 Z" fill="#414a6a"/></svg>
<div style="left:1901px;top:193px;width:15px;height:832px;border:1px solid #4f6282;border-radius:2px;box-sizing:border-box;background:linear-gradient(90deg,#f2f4f7,#dde3ea 45%,#c3ceda 55%,#b9c5d3)"></div>
<svg style="left:1905px;top:604px;" width="8" height="8" viewBox="0 0 8 8"><path d="M0 0.5 H8 M0 2.5 H8 M0 4.5 H8 M0 6.5 H8" stroke="#8596ad"/></svg>
<svg style="left:1904px;top:1110px;" width="10" height="6" viewBox="0 0 10 6"><path d="M0 0.5 L5 5.5 L10 0.5 Z" fill="#414a6a"/></svg>
<div style="left:1900px;top:1122px;width:16px;height:17px;background:#7797c2"></div>
<div style="left:0px;top:1139px;width:1917px;height:21px;background:linear-gradient(#ffffff 0px,#ffffff 1px,#d5e5fa 1px,#cfe0f8 6px,#b3cff3 7px,#c3d8f4 13px,#d9e7f7 19px,#c9e0fb 20px)"></div>
<div style="left:66px;top:1140px;width:1px;height:19px;background:#a8c2e2;box-shadow:1px 0 0 #f0f6fd"></div>
<div style="left:7.50px;top:1142.84px;font-size:12px;line-height:12px;color:#15428b;transform:scaleX(0.8877);transform-origin:0 0;white-space:pre;">Listo</div>
<div style="left:1673px;top:1140px;width:1px;height:19px;background:#a8c2e2;box-shadow:1px 0 0 #f0f6fd"></div>
<div style="left:1680px;top:1140px;width:57px;height:18px;border:1px solid #a8c2e2;border-radius:2px;box-sizing:border-box;background:linear-gradient(#e6eef9,#cbdcf1)"></div>
<div style="left:1681px;top:1141px;width:18px;height:16px;background:linear-gradient(#fde4a4,#fbc45f 50%,#f9b33d 51%,#fde09a)"></div>
<svg style="left:1683px;top:1143px;" width="14" height="12" viewBox="0 0 14 12"><rect x="0.5" y="0.5" width="13" height="11" fill="#fff" stroke="#444"/><path d="M0.5 4 H13.5 M0.5 7.5 H13.5 M4.5 0.5 V11.5 M9 0.5 V11.5" stroke="#444"/></svg>
<svg style="left:1701px;top:1143px;" width="14" height="12" viewBox="0 0 14 12"><rect x="0.5" y="0.5" width="13" height="11" fill="#bbb" stroke="#444"/><rect x="3.5" y="2.5" width="7" height="7" fill="#fff" stroke="#555"/></svg>
<svg style="left:1720px;top:1143px;" width="14" height="12" viewBox="0 0 14 12"><rect x="0.5" y="0.5" width="13" height="11" fill="#aaa" stroke="#444"/><rect x="2.5" y="1.5" width="3" height="6" fill="#fff"/><rect x="7.5" y="1.5" width="3" height="6" fill="#fff"/></svg>
<div style="left:1744.00px;top:1143.84px;font-size:12px;line-height:12px;color:#15428b;transform:scaleX(0.9123);transform-origin:0 0;white-space:pre;">100%</div>
<svg style="left:1780px;top:1140px;" width="18" height="18" viewBox="0 0 18 18"><circle cx="9" cy="9" r="7.5" fill="#dfe8f4" stroke="#6c86a8"/><rect x="5" y="8" width="8" height="2" fill="#2b3f5f"/></svg>
<div style="left:1797px;top:1148px;width:101px;height:1px;background:#8aa0bd;box-shadow:0 1px 0 #fff"></div>
<svg style="left:1843px;top:1141px;" width="10" height="15" viewBox="0 0 10 15"><path d="M0.5 0.5 H9.5 V9 L5 14 L0.5 9 Z" fill="#f0f4fa" stroke="#6c86a8"/><path d="M4 3 V9" stroke="#6c86a8"/></svg>
<svg style="left:1898px;top:1139px;" width="20" height="20" viewBox="0 0 20 20"><circle cx="9" cy="10" r="7.5" fill="#dfe8f4" stroke="#6c86a8"/><rect x="5" y="9" width="8" height="2" fill="#2b3f5f"/><rect x="8" y="6" width="2" height="8" fill="#2b3f5f"/></svg>
<div style="left:0;top:1160px;width:1920px;height:40px;background:linear-gradient(90deg,#3a4f66 0%,#566e88 6%,#4f6680 12%,#465b73 20%,#4b6079 26%,#4a5e76 31%,#728ba5 35%,#9ab6d1 39%,#a8c4de 45%,#9db9d4 52%,#93afca 58%,#a2bed8 66%,#9fbbd5 76%,#98b4ce 84%,#8ca8c2 91%,#7d98b2 100%)"></div>
<div style="left:0px;top:1160px;width:1920px;height:1px;background:#2c3a4a"></div>
<div style="left:0px;top:1161px;width:1920px;height:1px;background:rgba(255,255,255,0.3)"></div>
<div style="left:0;top:1162px;width:1920px;height:38px;background:linear-gradient(rgba(255,255,255,0.12),rgba(0,0,0,0.06))"></div>
<div style="left:246px;top:1161px;width:53px;height:38px;border:1px solid rgba(15,25,35,0.8);border-radius:3px;box-sizing:border-box;background:linear-gradient(160deg,rgba(255,255,255,0.42) 0%,rgba(255,255,255,0.16) 45%,rgba(255,255,255,0.05) 100%);box-shadow:inset 0 0 0 1px rgba(255,255,255,0.35)"></div>
<div style="left:308px;top:1161px;width:58px;height:38px;border:1px solid rgba(15,25,35,0.8);border-radius:3px;box-sizing:border-box;background:linear-gradient(160deg,rgba(255,255,255,0.42) 0%,rgba(255,255,255,0.16) 45%,rgba(255,255,255,0.05) 100%);box-shadow:inset 0 0 0 1px rgba(255,255,255,0.35)"></div>
<div style="left:370px;top:1161px;width:58px;height:38px;border:1px solid rgba(15,25,35,0.8);border-radius:3px;box-sizing:border-box;background:linear-gradient(160deg,rgba(255,255,255,0.6) 0%,rgba(255,255,255,0.35) 45%,rgba(255,255,255,0.22) 100%);box-shadow:inset 0 0 0 1px rgba(255,255,255,0.35)"></div>
<div style="left:432px;top:1161px;width:58px;height:38px;border:1px solid rgba(15,25,35,0.8);border-radius:3px;box-sizing:border-box;background:linear-gradient(160deg,rgba(255,255,255,0.42) 0%,rgba(255,255,255,0.16) 45%,rgba(255,255,255,0.05) 100%);box-shadow:inset 0 0 0 1px rgba(255,255,255,0.35)"></div>
<div style="left:299px;top:1162px;width:2px;height:37px;background:rgba(20,30,40,0.5)"></div>
<svg style="left:7px;top:1162px;" width="40" height="38" viewBox="0 0 40 38"><defs><radialGradient id="so" cx="50%" cy="30%" r="70%"><stop offset="0" stop-color="#6aa8cc"/><stop offset="0.55" stop-color="#1d5d8c"/><stop offset="0.85" stop-color="#0e3d66"/><stop offset="1" stop-color="#19a0d8"/></radialGradient></defs><circle cx="20" cy="19.5" r="18" fill="url(#so)" stroke="#16324e" stroke-width="1"/><path d="M10 8 Q14 5.5 19.5 8 L18.5 18 Q14 15.5 8.5 18 Z" fill="#f0562a"/><path d="M21 8.5 Q26 10.5 31 8 L30 19 Q25 21 20 18.5 Z" fill="#8cc63f"/><path d="M8.3 19.5 Q14 17 18.3 19.5 L17.3 29.5 Q13 27 7.5 29.5 Z" fill="#1ea6ea"/><path d="M19.8 20 Q25 22 29.8 20 L28.8 30 Q24 32 19 30 Z" fill="#fbbc11"/><ellipse cx="20" cy="9" rx="13" ry="7" fill="rgba(255,255,255,0.22)"/></svg>
<svg style="left:72px;top:1164px;" width="34" height="34" viewBox="0 0 34 34"><defs><linearGradient id="ieg" x1="0" y1="0" x2="0" y2="1"><stop offset="0" stop-color="#5fc0f5"/><stop offset="1" stop-color="#0a58b8"/></linearGradient></defs><circle cx="17" cy="17.5" r="10.5" fill="url(#ieg)"/><circle cx="17.5" cy="17" r="5.5" fill="#1d3550"/><rect x="9" y="17" width="17" height="3.2" fill="url(#ieg)"/><rect x="20" y="19" width="8" height="6" fill="url(#ieg)"/><ellipse cx="17" cy="18" rx="17" ry="6.5" transform="rotate(-38 17 18)" fill="none" stroke="#eab020" stroke-width="2.2"/></svg>
<svg style="left:134px;top:1166px;" width="34" height="32" viewBox="0 0 34 32"><path d="M2 5 H12 L14 7 H31 V29 H2 Z" fill="#e8c35a"/><rect x="3" y="8" width="27" height="20" fill="#f5dc8a"/><rect x="6" y="3" width="4" height="3" fill="#3c3"/><rect x="13" y="4" width="4" height="3" fill="#c33"/><rect x="20" y="5" width="4" height="3" fill="#39f"/><path d="M8 20 H26 V29 H22 V24 H12 V29 H8 Z" fill="#8fc3f0" stroke="#4a8ac8" stroke-width="0.8"/></svg>
<svg style="left:196px;top:1168px;" width="30" height="28" viewBox="0 0 30 28"><rect x="5" y="2" width="22" height="24" fill="#9ad0f0" stroke="#5a9ac8"/><rect x="2" y="3" width="22" height="24" fill="#b8e0f8" stroke="#5a9ac8"/><circle cx="12" cy="15" r="8.5" fill="#f07a20"/><path d="M9 10 L17 15 L9 20 Z" fill="#fff"/></svg>
<svg style="left:257px;top:1166px;" width="30" height="30" viewBox="0 0 30 30"><rect x="1" y="1" width="28" height="28" fill="#1f5fb8"/><path d="M8 8 H22 L10 22 H22" stroke="#fff" stroke-width="4" fill="none"/></svg>
<svg style="left:322px;top:1166px;" width="30" height="30" viewBox="0 0 30 30"><circle cx="15" cy="15" r="14" fill="#db3236"/><path d="M15 15 L27.1 8 A14 14 0 0 1 15 29 Z" fill="#f4c20d"/><path d="M15 15 L15 29 A14 14 0 0 1 2.9 8 Z" fill="#3cba54"/><circle cx="15" cy="15" r="6.5" fill="#fff"/><circle cx="15" cy="15" r="5" fill="#4885ed"/></svg>
<svg style="left:383px;top:1163px;" width="32" height="34" viewBox="0 0 32 34"><path d="M3 3 H17 V31 H7 Q2 31 2 26 Z" fill="#f0f6ea" stroke="#3c9a28" stroke-width="1.2"/><path d="M6 9 L31 11 V32 L6 30 Z" fill="#f6f8ee" stroke="#9ab08a" stroke-width="0.6"/><g fill="#4f9a3c"><rect x="20" y="13" width="4" height="3"/><rect x="26" y="13.5" width="4" height="3"/><rect x="20" y="18.5" width="4" height="3"/><rect x="26" y="19" width="4" height="3"/><rect x="8" y="24" width="5" height="3"/><rect x="15" y="24.5" width="5" height="3"/><rect x="22" y="25" width="5" height="3"/></g><path d="M8 12 L17 21 M17 12 L8 21" stroke="#2a6a1a" stroke-width="3"/></svg>
<svg style="left:449px;top:1166px;" width="26" height="30" viewBox="0 0 26 30"><rect x="2" y="1" width="22" height="28" rx="2" fill="#cfe3f3" stroke="#6a8fb5"/><rect x="5" y="4" width="16" height="7" fill="#fff" stroke="#8aa"/><path d="M6 14 H20 M6 18 H20 M6 22 H20 M6 26 H20" stroke="#5a8ab8" stroke-width="2" stroke-dasharray="2 1.5"/><rect x="19" y="20" width="3" height="7" fill="#f5a020"/></svg>
<svg style="left:1724px;top:1176px;" width="10" height="6" viewBox="0 0 10 6"><path d="M0.5 5.5 L5 0.5 L9.5 5.5 Z" fill="#fff"/></svg>
<svg style="left:1744px;top:1171px;" width="14" height="19" viewBox="0 0 14 19"><path d="M1.5 1 V18" stroke="#fff" stroke-width="1.5"/><path d="M2 2 Q6 0 8 3 Q11 5 13 3 V10 Q11 12 8 9 Q6 7 2 9 Z" fill="#fff"/></svg>
<svg style="left:1768px;top:1171px;" width="18" height="18" viewBox="0 0 18 18"><rect x="4" y="5" width="13" height="9" fill="none" stroke="#fff" stroke-width="1.5"/><path d="M7 17 H14 M10.5 14 V17" stroke="#fff" stroke-width="1.5"/><rect x="1" y="1" width="5" height="8" fill="#fff" opacity="0.8"/></svg>
<svg style="left:1792px;top:1171px;" width="18" height="18" viewBox="0 0 18 18"><path d="M1 6 H4 L9 2 V16 L4 12 H1 Z" fill="#fff"/><path d="M11 6 Q13 9 11 12 M13 4 Q16 9 13 14" stroke="#fff" stroke-width="1.2" fill="none"/></svg>
<div style="left:1841.00px;top:1166.84px;font-size:12px;line-height:12px;color:#fff;transform:scaleX(0.9325);transform-origin:0 0;white-space:pre;text-shadow:0 0 4px rgba(0,0,0,0.5)">18:53</div>
<div style="left:1826.00px;top:1183.84px;font-size:12px;line-height:12px;color:#fff;transform:scaleX(0.9804);transform-origin:0 0;white-space:pre;text-shadow:0 0 4px rgba(0,0,0,0.5)">20/10/2011</div>
<div style="left:1897px;top:1161px;width:23px;height:39px;border-left:1px solid rgba(30,40,50,0.8);box-sizing:border-box;background:linear-gradient(rgba(255,255,255,0.35),rgba(255,255,255,0.15))"></div>
</body></html>
